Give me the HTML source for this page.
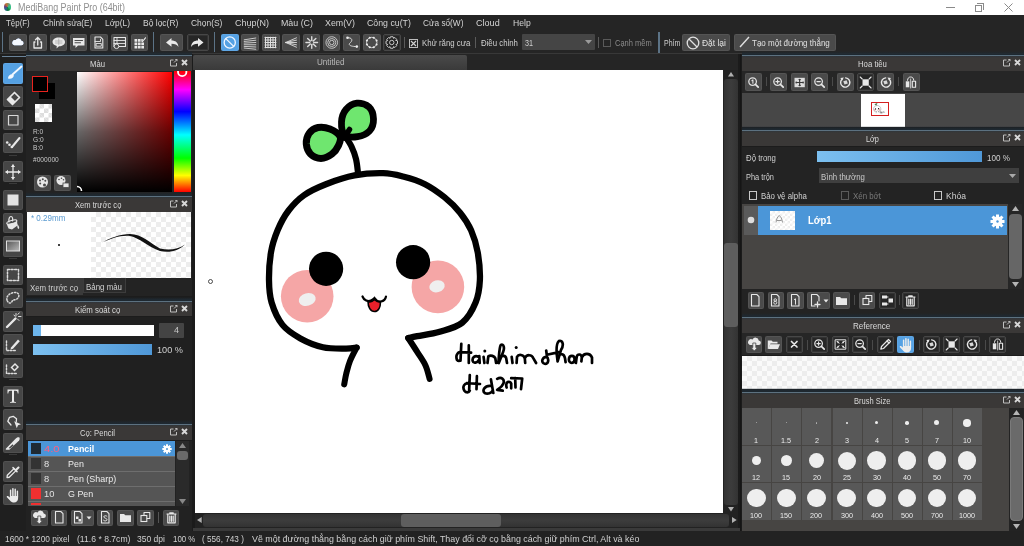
<!DOCTYPE html><html><head><meta charset="utf-8"><style>
*{margin:0;padding:0;box-sizing:border-box}
html,body{width:1024px;height:546px;overflow:hidden;background:#1c1c1c;font-family:"Liberation Sans",sans-serif}
.a{position:absolute}
.t{position:absolute;white-space:nowrap;line-height:1;transform-origin:0 0}
.b{position:absolute;background:#4a4a4a;border-radius:2px;box-shadow:inset 0 0 0 1px rgba(255,255,255,0.06)}
svg{position:absolute;overflow:visible}
</style></head><body>
<div class="a" style="left:0px;top:0px;width:1024px;height:15px;background:#fff"></div>
<div class="a" style="left:4px;top:3px;width:6.6px;height:8px;border-radius:50%;background:conic-gradient(from -30deg,#c86a30,#40b890 25%,#20c070 40%,#107a40 55%,#2a6a90 70%,#6a3a80 85%,#c86a30)"></div>
<div class="t" style="left:18.00px;top:2.53px;font-size:10px;color:#8f8f8f;transform:scaleX(0.891);">MediBang Paint Pro (64bit)</div>
<div class="a" style="left:946px;top:7px;width:9px;height:1px;background:#8a8a8a"></div>
<div class="a" style="left:974.5px;top:4.5px;width:7px;height:7px;border:1px solid #8a8a8a"></div>
<div class="a" style="left:976.5px;top:2.5px;width:7px;height:7px;border-top:1px solid #8a8a8a;border-right:1px solid #8a8a8a"></div>
<svg style="left:1004px;top:3px;" width="9" height="9" viewBox="0 0 9 9"><path d="M0.5 0.5L8.5 8.5M8.5 0.5L0.5 8.5" stroke="#8a8a8a" stroke-width="1"/></svg>
<div class="a" style="left:0px;top:15px;width:1024px;height:15px;background:#252525"></div>
<div class="t" style="left:6.40px;top:18.04px;font-size:9.4px;color:#d4d4d4;transform:scaleX(0.844);">Tệp(F)</div>
<div class="t" style="left:42.80px;top:18.04px;font-size:9.4px;color:#d4d4d4;transform:scaleX(0.885);">Chỉnh sửa(E)</div>
<div class="t" style="left:105.00px;top:18.04px;font-size:9.4px;color:#d4d4d4;transform:scaleX(0.889);">Lớp(L)</div>
<div class="t" style="left:142.50px;top:18.04px;font-size:9.4px;color:#d4d4d4;transform:scaleX(0.906);">Bộ lọc(R)</div>
<div class="t" style="left:190.50px;top:18.04px;font-size:9.4px;color:#d4d4d4;transform:scaleX(0.900);">Chọn(S)</div>
<div class="t" style="left:234.50px;top:18.04px;font-size:9.4px;color:#d4d4d4;transform:scaleX(0.957);">Chụp(N)</div>
<div class="t" style="left:281.00px;top:18.04px;font-size:9.4px;color:#d4d4d4;transform:scaleX(0.943);">Màu (C)</div>
<div class="t" style="left:324.75px;top:18.04px;font-size:9.4px;color:#d4d4d4;transform:scaleX(0.941);">Xem(V)</div>
<div class="t" style="left:366.50px;top:18.04px;font-size:9.4px;color:#d4d4d4;transform:scaleX(0.936);">Công cụ(T)</div>
<div class="t" style="left:423.00px;top:18.04px;font-size:9.4px;color:#d4d4d4;transform:scaleX(0.881);">Cửa sổ(W)</div>
<div class="t" style="left:476.00px;top:18.04px;font-size:9.4px;color:#d4d4d4;transform:scaleX(0.966);">Cloud</div>
<div class="t" style="left:513.00px;top:18.04px;font-size:9.4px;color:#d4d4d4;transform:scaleX(0.919);">Help</div>
<div class="a" style="left:0px;top:30px;width:1024px;height:24px;background:#252525"></div>
<div class="a" style="left:0px;top:30px;width:838px;height:23.5px;background:#252525"></div>
<div class="a" style="left:0px;top:53px;width:1024px;height:1px;background:#383838"></div>
<div class="a" style="left:2px;top:32px;width:1.2px;height:20px;background:#5c7386"></div>
<svg width="0" height="0" style="position:absolute"><defs><filter id="glow" x="-50%" y="-50%" width="200%" height="200%"><feGaussianBlur stdDeviation="0.8" result="b"/><feFlood flood-color="#7ab8ff" flood-opacity="0.9"/><feComposite in2="b" operator="in"/><feMerge><feMergeNode/><feMergeNode in="SourceGraphic"/></feMerge></filter></defs></svg>
<div class="b" style="left:9.0px;top:34px;width:17.5px;height:17px;background:#4a4a4a"></div>
<svg style="left:9.00px;top:34.00px" width="17.5" height="17" viewBox="0 0 17.5 17"><g transform="translate(8.75 8.5) scale(0.8) translate(-8.75 -9)"><path d="M4.5 12.5H13a2.8 2.8 0 0 0 .3-5.6A3.8 3.8 0 0 0 6.2 6 2.6 2.6 0 0 0 4.5 12.5Z" fill="#f4f8ff" filter="url(#glow)"/></g></svg>
<div class="b" style="left:29.3px;top:34px;width:17.5px;height:17px;background:#4a4a4a"></div>
<svg style="left:29.30px;top:34.00px" width="17.5" height="17" viewBox="0 0 17.5 17"><path d="M6 8H5V14H12.5V8H11.5" fill="none" stroke="#e8e8e8" stroke-width="1.3" stroke-linecap="round" stroke-linejoin="round" /><path d="M8.75 11V3.5M6.5 5.8L8.75 3.5L11 5.8" fill="none" stroke="#e8e8e8" stroke-width="1.3" stroke-linecap="round" stroke-linejoin="round" /></svg>
<div class="b" style="left:49.6px;top:34px;width:17.5px;height:17px;background:#4a4a4a"></div>
<svg style="left:49.60px;top:34.00px" width="17.5" height="17" viewBox="0 0 17.5 17"><path d="M8.75 3.5C12.5 3.5 15 5.5 15 8C15 10.5 12.5 12.3 9 12.3L6.5 14.5L6.8 12C4.3 11.4 2.5 9.8 2.5 8C2.5 5.5 5 3.5 8.75 3.5Z" fill="#e8e8e8" /><path d="M5.5 7H12M5.5 9H12M8.75 5V10.5" fill="none" stroke="#a0a0a0" stroke-width="0.7" stroke-linecap="round" stroke-linejoin="round" /></svg>
<div class="b" style="left:69.9px;top:34px;width:17.5px;height:17px;background:#4a4a4a"></div>
<svg style="left:69.90px;top:34.00px" width="17.5" height="17" viewBox="0 0 17.5 17"><path d="M3 4H14.5V11.5H8L5.5 14V11.5H3Z" fill="#e8e8e8" /><path d="M5 6.5H12.5M5 8.8H10.5" fill="none" stroke="#4a4a4a" stroke-width="1.1" stroke-linecap="round" stroke-linejoin="round" /></svg>
<div class="b" style="left:90.2px;top:34px;width:17.5px;height:17px;background:#4a4a4a"></div>
<svg style="left:90.20px;top:34.00px" width="17.5" height="17" viewBox="0 0 17.5 17"><path d="M5 3H10.5L12.8 5.3V14H5Z" fill="none" stroke="#e8e8e8" stroke-width="1.1" stroke-linecap="round" stroke-linejoin="round" /><path d="M5 7.5H10.5V5.3M6.5 9.5H11.3V12.2H6.5Z" fill="none" stroke="#e8e8e8" stroke-width="0.9" stroke-linecap="round" stroke-linejoin="round" /></svg>
<div class="b" style="left:110.5px;top:34px;width:17.5px;height:17px;background:#4a4a4a"></div>
<svg style="left:110.50px;top:34.00px" width="17.5" height="17" viewBox="0 0 17.5 17"><path d="M3 3.5H14.5V12.5H3Z" fill="none" stroke="#e8e8e8" stroke-width="1.1" stroke-linecap="round" stroke-linejoin="round" /><path d="M3 6.5H14.5M3 9.5H14.5M6 3.5V12.5" fill="none" stroke="#e8e8e8" stroke-width="0.9" stroke-linecap="round" stroke-linejoin="round" /><circle cx="5.5" cy="12.3" r="2.3" fill="#4a4a4a" stroke="#e8e8e8" stroke-width="0.9"/></svg>
<div class="b" style="left:130.8px;top:34px;width:17.5px;height:17px;background:#4a4a4a"></div>
<svg style="left:130.80px;top:34.00px" width="17.5" height="17" viewBox="0 0 17.5 17"><path d="M3.5 5h2.7v2.7H3.5zM6.9 5h2.7v2.7H6.9zM3.5 8.4h2.7v2.7H3.5zM6.9 8.4h2.7v2.7H6.9zM10.3 8.4h2.7v2.7H10.3zM3.5 11.8h2.7v2.7H3.5zM6.9 11.8h2.7v2.7H6.9zM10.3 11.8h2.7v2.7H10.3zM10.3 5h1.5v2.7H10.3z" fill="#e8e8e8" /><path d="M11.5 7.5L14.5 3.8" fill="none" stroke="#e8e8e8" stroke-width="1.1" stroke-linecap="round" stroke-linejoin="round" /></svg>
<div class="a" style="left:152.5px;top:32px;width:1.2px;height:20px;background:#5c7386"></div>
<div class="b" style="left:160px;top:34px;width:23px;height:17px;background:#4a4a4a"></div>
<svg style="left:162.75px;top:34.00px" width="17.5" height="17" viewBox="0 0 17.5 17"><path d="M3 8.5L8.5 4V6.5C12.5 6.5 15 8.5 15.5 13C14 10.5 12 9.8 8.5 9.8V12.8Z" fill="#e8e8e8" /></svg>
<div class="b" style="left:187px;top:34px;width:22px;height:17px;background:#262626;border:1px solid #474747"></div>
<svg style="left:189.25px;top:34.00px" width="17.5" height="17" viewBox="0 0 17.5 17"><path d="M14.5 8.5L9 4V6.5C5 6.5 2.5 8.5 2 13C3.5 10.5 5.5 9.8 9 9.8V12.8Z" fill="#e8e8e8" /></svg>
<div class="a" style="left:213.5px;top:32px;width:1.2px;height:20px;background:#5c7386"></div>
<div class="b" style="left:221px;top:34px;width:17.5px;height:17px;background:#55a1e3"></div>
<svg style="left:221.00px;top:34.00px" width="17.5" height="17" viewBox="0 0 17.5 17"><circle cx="8.75" cy="8.5" r="5.6" fill="none" stroke="#f0f6ff" stroke-width="1.3"/><path d="M4.8 4.6L12.7 12.4" fill="none" stroke="#f0f6ff" stroke-width="1.3" stroke-linecap="round" stroke-linejoin="round" /></svg>
<div class="b" style="left:241.3px;top:34px;width:17.5px;height:17px;background:#4a4a4a"></div>
<svg style="left:241.30px;top:34.00px" width="17.5" height="17" viewBox="0 0 17.5 17"><path d="M3.2 5.80L14.8 4.00M3.2 7.45L14.8 6.25M3.2 9.10L14.8 8.50M3.2 10.75L14.8 10.75M3.2 12.40L14.8 13.00M3.2 14.05L14.8 15.25" fill="none" stroke="#d8d8d8" stroke-width="0.9" stroke-linecap="round" stroke-linejoin="round" /></svg>
<div class="b" style="left:262px;top:34px;width:17.5px;height:17px;background:#4a4a4a"></div>
<svg style="left:262.00px;top:34.00px" width="17.5" height="17" viewBox="0 0 17.5 17"><path d="M3.50 3.2V13.8M6.00 3.2V13.8M8.50 3.2V13.8M11.00 3.2V13.8M13.50 3.2V13.8M3 3.50H14M3 6.00H14M3 8.50H14M3 11.00H14M3 13.50H14" fill="none" stroke="#e0e0e0" stroke-width="1" stroke-linecap="round" stroke-linejoin="round" /></svg>
<div class="b" style="left:282px;top:34px;width:17.5px;height:17px;background:#4a4a4a"></div>
<svg style="left:282.00px;top:34.00px" width="17.5" height="17" viewBox="0 0 17.5 17"><path d="M3.8 8.5L14.5 3.80M3.8 8.5L14.5 6.15M3.8 8.5L14.5 8.50M3.8 8.5L14.5 10.85M3.8 8.5L14.5 13.20" fill="none" stroke="#dcdcdc" stroke-width="0.9" stroke-linecap="round" stroke-linejoin="round" /></svg>
<div class="b" style="left:302.6px;top:34px;width:17.5px;height:17px;background:#4a4a4a"></div>
<svg style="left:302.60px;top:34.00px" width="17.5" height="17" viewBox="0 0 17.5 17"><path d="M10.75 8.50L14.55 8.50M10.16 9.91L12.85 12.60M8.75 10.50L8.75 14.30M7.34 9.91L4.65 12.60M6.75 8.50L2.95 8.50M7.34 7.09L4.65 4.40M8.75 6.50L8.75 2.70M10.16 7.09L12.85 4.40" fill="none" stroke="#dcdcdc" stroke-width="1.4" stroke-linecap="round" stroke-linejoin="round" /></svg>
<div class="b" style="left:322.6px;top:34px;width:17.5px;height:17px;background:#4a4a4a"></div>
<svg style="left:322.60px;top:34.00px" width="17.5" height="17" viewBox="0 0 17.5 17"><g fill="none" stroke="#d0d0d0" stroke-width="0.9"><circle cx="8.75" cy="8.5" r="5.8"/><circle cx="8.75" cy="8.5" r="4"/><circle cx="8.75" cy="8.5" r="2.2"/></g></svg>
<div class="b" style="left:342.6px;top:34px;width:17.5px;height:17px;background:#4a4a4a"></div>
<svg style="left:342.60px;top:34.00px" width="17.5" height="17" viewBox="0 0 17.5 17"><path d="M4.5 3.8C9 3.3 10 6.3 7.5 8.5C5 10.5 6 12.5 13.8 12.6" fill="none" stroke="#d8d8d8" stroke-width="1" stroke-linecap="round" stroke-linejoin="round" /><circle cx="4.5" cy="3.8" r="1.3" fill="#ececec"/><circle cx="13.8" cy="12.6" r="1.3" fill="#ececec"/></svg>
<div class="b" style="left:363.4px;top:34px;width:17.5px;height:17px;background:#4a4a4a"></div>
<svg style="left:363.40px;top:34.00px" width="17.5" height="17" viewBox="0 0 17.5 17"><circle cx="8.75" cy="8.5" r="5.2" fill="none" stroke="#d8d8d8" stroke-width="0.9"/><circle cx="13.55" cy="10.49" r="1.05" fill="#ececec"/><circle cx="10.74" cy="13.30" r="1.05" fill="#ececec"/><circle cx="6.76" cy="13.30" r="1.05" fill="#ececec"/><circle cx="3.95" cy="10.49" r="1.05" fill="#ececec"/><circle cx="3.95" cy="6.51" r="1.05" fill="#ececec"/><circle cx="6.76" cy="3.70" r="1.05" fill="#ececec"/><circle cx="10.74" cy="3.70" r="1.05" fill="#ececec"/><circle cx="13.55" cy="6.51" r="1.05" fill="#ececec"/></svg>
<div class="b" style="left:383.4px;top:34px;width:17.5px;height:17px;background:#262626;border:1px solid #474747"></div>
<svg style="left:383.40px;top:34.00px" width="17.5" height="17" viewBox="0 0 17.5 17"><path d="M14.51 7.21L14.51 9.79L12.95 10.38L13.05 10.14L13.73 11.66L11.91 13.48L10.39 12.80L10.63 12.70L10.04 14.26L7.46 14.26L6.87 12.70L7.11 12.80L5.59 13.48L3.77 11.66L4.45 10.14L4.55 10.38L2.99 9.79L2.99 7.21L4.55 6.62L4.45 6.86L3.77 5.34L5.59 3.52L7.11 4.20L6.87 4.30L7.46 2.74L10.04 2.74L10.63 4.30L10.39 4.20L11.91 3.52L13.73 5.34L13.05 6.86L12.95 6.62Z" fill="none" stroke="#d8d8d8" stroke-width="0.9" stroke-linecap="round" stroke-linejoin="round" /><circle cx="8.75" cy="8.5" r="2.2" fill="none" stroke="#d8d8d8" stroke-width="0.9"/></svg>
<div class="a" style="left:404px;top:37px;width:1px;height:11px;background:#5a5a5a"></div>
<div class="a" style="left:409px;top:38.5px;width:9px;height:9px;border:1px solid #bdbdbd"></div>
<svg style="left:411px;top:40.5px;" width="5" height="5" viewBox="0 0 5 5"><path d="M0 0L5 5M5 0L0 5" stroke="#d0d0d0" stroke-width="1.2"/></svg>
<div class="t" style="left:421.50px;top:38.04px;font-size:9.4px;color:#d0d0d0;transform:scaleX(0.835);">Khử răng cưa</div>
<div class="a" style="left:475px;top:37px;width:1px;height:11px;background:#5a5a5a"></div>
<div class="t" style="left:481.30px;top:38.04px;font-size:9.4px;color:#d0d0d0;transform:scaleX(0.833);">Điều chỉnh</div>
<div class="a" style="left:522px;top:34px;width:72.6px;height:15.5px;background:#454545;border-radius:1px"></div>
<div class="t" style="left:524.50px;top:38.04px;font-size:9.4px;color:#d0d0d0;transform:scaleX(0.767);">31</div>
<svg style="left:585px;top:40px;" width="7" height="4" viewBox="0 0 7 4"><path d="M0 0H7L3.5 4Z" fill="#9a9a9a"/></svg>
<div class="a" style="left:597.5px;top:37px;width:1px;height:11px;background:#5a5a5a"></div>
<div class="a" style="left:603px;top:38.5px;width:8px;height:8.5px;border:1px solid #5a5a5a"></div>
<div class="t" style="left:615.20px;top:38.04px;font-size:9.4px;color:#8a8a8a;transform:scaleX(0.801);">Cạnh mềm</div>
<div class="a" style="left:657.5px;top:31.5px;width:2px;height:21px;background:#5c7386"></div>
<div class="t" style="left:663.70px;top:38.04px;font-size:9.4px;color:#d0d0d0;transform:scaleX(0.743);">Phím</div>
<div class="b" style="left:682px;top:34px;width:47.6px;height:17px"></div>
<svg style="left:685.5px;top:35.5px;" width="14" height="14" viewBox="0 0 14 14"><circle cx="7" cy="7" r="5.8" fill="none" stroke="#e0e0e0" stroke-width="1.3"/><path d="M3 3L11 11" stroke="#e0e0e0" stroke-width="1.3"/></svg>
<div class="t" style="left:702.00px;top:38.04px;font-size:9.4px;color:#e0e0e0;transform:scaleX(0.901);">Đặt lại</div>
<div class="b" style="left:733.6px;top:34px;width:102px;height:17px"></div>
<svg style="left:739px;top:36px;" width="12" height="12" viewBox="0 0 12 12"><path d="M1 11L10 1" stroke="#e0e0e0" stroke-width="1.4"/></svg>
<div class="t" style="left:752.00px;top:38.04px;font-size:9.4px;color:#e0e0e0;transform:scaleX(0.854);">Tạo một đường thẳng</div>
<div class="a" style="left:0px;top:54px;width:26px;height:477px;background:#1f1f1f"></div>
<div class="a" style="left:1.5px;top:55.5px;width:24px;height:1px;background:#6a8298"></div>
<div class="b" style="left:3px;top:63px;width:20.3px;height:20.5px;background:#55a1e3"></div>
<svg style="left:3px;top:63.3px" width="20" height="20" viewBox="0 0 20 20"><path d="M9.5 11.5L18.5 3.5" fill="none" stroke="#f2f8ff" stroke-width="1.8" stroke-linecap="round" stroke-linejoin="round" /><path d="M5 15.5C5 13 7 11 9.8 11.3L10.8 12.3C10.8 15 8 16.5 5 15.5Z" fill="#f2f8ff" /></svg>
<div class="b" style="left:3px;top:86.25px;width:20.3px;height:20.5px;background:#464646"></div>
<svg style="left:3px;top:86.55px" width="20" height="20" viewBox="0 0 20 20"><path d="M4.5 12.5L11.5 5.5L16.5 10.5L9.5 17.5Z" fill="none" stroke="#e8e8e8" stroke-width="1.7" stroke-linecap="round" stroke-linejoin="round" /><path d="M4.5 12.5L7.5 9.5L12.5 14.5L9.5 17.5Z" fill="#e8e8e8" /></svg>
<div class="b" style="left:3px;top:109.5px;width:20.3px;height:20.5px;background:#464646"></div>
<svg style="left:3px;top:109.8px" width="20" height="20" viewBox="0 0 20 20"><path d="M5.5 5.5H15V15H5.5Z" fill="none" stroke="#d8d8d8" stroke-width="1.2" stroke-linecap="round" stroke-linejoin="round" /></svg>
<div class="b" style="left:3px;top:132.75px;width:20.3px;height:20.5px;background:#464646"></div>
<svg style="left:3px;top:133.05px" width="20" height="20" viewBox="0 0 20 20"><path d="M9 14L16.5 5" fill="none" stroke="#e8e8e8" stroke-width="2" stroke-linecap="round" stroke-linejoin="round" /><circle cx="4.2" cy="9.5" r="1.3" fill="#e8e8e8"/><circle cx="6.5" cy="11.8" r="1.3" fill="#e8e8e8"/><circle cx="8.8" cy="14" r="1.3" fill="#e8e8e8"/></svg>
<div class="b" style="left:3px;top:161.2px;width:20.3px;height:20.5px;background:#464646"></div>
<svg style="left:3px;top:161.5px" width="20" height="20" viewBox="0 0 20 20"><path d="M10 3V17M3 10H17" fill="none" stroke="#e8e8e8" stroke-width="1.3" stroke-linecap="round" stroke-linejoin="round" /><path d="M10 2.5L7.8 5H12.2ZM10 17.5L7.8 15H12.2ZM2.5 10L5 7.8V12.2ZM17.5 10L15 7.8V12.2Z" fill="#e8e8e8" /></svg>
<div class="b" style="left:3px;top:189.64999999999998px;width:20.3px;height:20.5px;background:#464646"></div>
<svg style="left:3px;top:189.95px" width="20" height="20" viewBox="0 0 20 20"><path d="M4.5 4.5H15.5V15.5H4.5Z" fill="#e4e4e4" /></svg>
<div class="b" style="left:3px;top:212.89999999999998px;width:20.3px;height:20.5px;background:#464646"></div>
<svg style="left:3px;top:213.2px" width="20" height="20" viewBox="0 0 20 20"><path d="M3.5 10.5L14 7.5L14.5 12.5L9 16.5L5.5 15.5Z" fill="#e8e8e8" /><ellipse cx="8.8" cy="9" rx="5.3" ry="1.6" transform="rotate(-16 8.8 9)" fill="#464646" stroke="#e8e8e8" stroke-width="1"/><path d="M6 8.8C5.5 5.5 6.5 3.5 8 3.5C9.5 3.5 10 5.5 9.5 8" fill="none" stroke="#e8e8e8" stroke-width="1.2" stroke-linecap="round" stroke-linejoin="round" /><path d="M14.3 11C16 12.8 16.8 15 15.8 15.8C14.8 16.3 14 14.5 14.3 11Z" fill="#e8e8e8" /></svg>
<div class="b" style="left:3px;top:236.14999999999998px;width:20.3px;height:20.5px;background:#464646"></div>
<svg style="left:3px;top:236.45px" width="20" height="20" viewBox="0 0 20 20"><defs><linearGradient id="gg" x1="0" y1="0" x2="1" y2="1"><stop offset="0" stop-color="#555"/><stop offset="1" stop-color="#bbb"/></linearGradient></defs><rect x="3.5" y="5" width="13" height="10" fill="url(#gg)" stroke="#e0e0e0" stroke-width="1"/></svg>
<div class="b" style="left:3px;top:264.59999999999997px;width:20.3px;height:20.5px;background:#464646"></div>
<svg style="left:3px;top:264.9px" width="20" height="20" viewBox="0 0 20 20"><path d="M4.5 4.5H15.5V15.5H4.5Z" fill="none" stroke="#dcdcdc" stroke-width="1.5" stroke-linecap="round" stroke-linejoin="round" stroke-dasharray="2 1.6"/></svg>
<div class="b" style="left:3px;top:287.84999999999997px;width:20.3px;height:20.5px;background:#464646"></div>
<svg style="left:3px;top:288.15px" width="20" height="20" viewBox="0 0 20 20"><path d="M4 12C3 8 7 5 11 4.5C15.5 4 17 7 15 10C13 12.5 10 11 9 13.5C8 16 5 15.5 4 12Z" fill="none" stroke="#dcdcdc" stroke-width="1.5" stroke-linecap="round" stroke-linejoin="round" stroke-dasharray="1.2 1.8" stroke-linecap="butt"/></svg>
<div class="b" style="left:3px;top:311.09999999999997px;width:20.3px;height:20.5px;background:#464646"></div>
<svg style="left:3px;top:311.4px" width="20" height="20" viewBox="0 0 20 20"><path d="M4 16L12.5 7.5" fill="none" stroke="#e8e8e8" stroke-width="2.4" stroke-linecap="round" stroke-linejoin="round" /><path d="M13 2.5V5M15.5 5.5H18M14.8 3.3L16.3 2M11 4L12 5.3M14.5 8L16 9.5" fill="none" stroke="#dcdcdc" stroke-width="1" stroke-linecap="round" stroke-linejoin="round" /></svg>
<div class="b" style="left:3px;top:334.34999999999997px;width:20.3px;height:20.5px;background:#464646"></div>
<svg style="left:3px;top:334.65px" width="20" height="20" viewBox="0 0 20 20"><path d="M3.5 6V15.5H13" fill="none" stroke="#dcdcdc" stroke-width="1.4" stroke-linecap="round" stroke-linejoin="round" stroke-dasharray="1.8 1.5"/><path d="M8 12.5L15 4.5L16.8 6.2L10 13.8L7.5 14.5Z" fill="#e8e8e8" /></svg>
<div class="b" style="left:3px;top:357.59999999999997px;width:20.3px;height:20.5px;background:#464646"></div>
<svg style="left:3px;top:357.9px" width="20" height="20" viewBox="0 0 20 20"><path d="M3.5 7V15.5H14" fill="none" stroke="#dcdcdc" stroke-width="1.4" stroke-linecap="round" stroke-linejoin="round" stroke-dasharray="1.8 1.5"/><path d="M7.5 9.5L12 5L16 9L11.5 13.5Z" fill="#e8e8e8" /><path d="M9.5 9.5L12 7L14 9L11.5 11.5Z" fill="#464646" /></svg>
<div class="b" style="left:3px;top:386.04999999999995px;width:20.3px;height:20.5px;background:#464646"></div>
<svg style="left:3px;top:386.34999999999997px" width="20" height="20" viewBox="0 0 20 20"><path d="M4.5 3.5H15.5V7.5H14.7C14.5 5.5 14 4.8 12.5 4.8H11V15C11 15.8 11.5 16 13 16.1V16.8H7V16.1C8.5 16 9 15.8 9 15V4.8H7.5C6 4.8 5.5 5.5 5.3 7.5H4.5Z" fill="#ececec" /></svg>
<div class="b" style="left:3px;top:409.29999999999995px;width:20.3px;height:20.5px;background:#464646"></div>
<svg style="left:3px;top:409.59999999999997px" width="20" height="20" viewBox="0 0 20 20"><path d="M8 15L4.8 11.3L6.5 7.3L10.2 6.3L13.5 8.8L13.3 11.5" fill="none" stroke="#e8e8e8" stroke-width="1.3" stroke-linecap="round" stroke-linejoin="round" /><path d="M11.2 11.2L18 14.3L15 15.2L13.8 18.2Z" fill="#e8e8e8" /></svg>
<div class="b" style="left:3px;top:432.54999999999995px;width:20.3px;height:20.5px;background:#464646"></div>
<svg style="left:3px;top:432.84999999999997px" width="20" height="20" viewBox="0 0 20 20"><path d="M2.8 15.8L12.8 5.6C13.8 4.6 15.3 4 16.4 4.4C17 5.4 16.6 7 15.6 8L6.3 16.8L2.8 16.8Z" fill="#e8e8e8" /><path d="M5.6 14.9L9.6 11.2L10.6 12.6L7 15.5Z" fill="#464646" /></svg>
<div class="b" style="left:3px;top:460.99999999999994px;width:20.3px;height:20.5px;background:#464646"></div>
<svg style="left:3px;top:461.29999999999995px" width="20" height="20" viewBox="0 0 20 20"><path d="M4 16.5L4.3 14.3L11 7.6L13 9.6L6.2 16.3Z" fill="none" stroke="#e8e8e8" stroke-width="1.3" stroke-linecap="round" stroke-linejoin="round" /><path d="M10 6.6L14 10.6" fill="none" stroke="#e8e8e8" stroke-width="1.5" stroke-linecap="round" stroke-linejoin="round" /><path d="M12 8.6L14.8 5.8C15.8 4.8 17.2 6.2 16.2 7.2L13.4 10Z" fill="#e8e8e8" /></svg>
<div class="b" style="left:3px;top:484.24999999999994px;width:20.3px;height:20.5px;background:#464646"></div>
<svg style="left:3px;top:484.54999999999995px" width="20" height="20" viewBox="0 0 20 20"><path d="M7.6 11.5V5.2M9.9 11V3.6M12.2 11V4.2M14.4 11.5V6.2" fill="none" stroke="#ececec" stroke-width="1.45" stroke-linecap="round" stroke-linejoin="round" /><path d="M6.9 11H15.1V13.2C15.1 15.6 13.5 17.4 11 17.4H10.2C8.7 17.4 7.8 16.7 7 15.6L3.9 12.2C3.3 11.4 4.2 10.5 5 11.1L6.9 12.6Z" fill="#ececec" /></svg>
<div class="a" style="left:9px;top:154.55px;width:8px;height:1px;background:#3a3a3a"></div>
<div class="a" style="left:9px;top:183.0px;width:8px;height:1px;background:#3a3a3a"></div>
<div class="a" style="left:9px;top:257.95px;width:8px;height:1px;background:#3a3a3a"></div>
<div class="a" style="left:9px;top:379.4px;width:8px;height:1px;background:#3a3a3a"></div>
<div class="a" style="left:9px;top:454.34999999999997px;width:8px;height:1px;background:#3a3a3a"></div>
<div class="a" style="left:26px;top:51.0px;width:165.5px;height:4.5px;background:linear-gradient(rgba(30,40,48,0),#1e2830 60%)"></div>
<div class="a" style="left:26px;top:55.0px;width:165.5px;height:1.2px;background:#5c7180"></div>
<div class="a" style="left:26px;top:56.2px;width:165.5px;height:14.8px;background:linear-gradient(#30353a,#3a3837 2px)"></div>
<div class="t" style="left:90.25px;top:59.04px;font-size:9.4px;color:#dadada;transform:scaleX(0.820);">Màu</div>
<svg style="left:169.0px;top:58.0px;" width="9" height="9" viewBox="0 0 9 9"><path d="M4.5 2H1.5V8H7.5V5" fill="none" stroke="#bfbfbf" stroke-width="1"/><path d="M5 4.5L8 1.5M6.3 1.5H8V3.2" fill="none" stroke="#bfbfbf" stroke-width="1"/></svg>
<svg style="left:181.0px;top:59.0px;" width="7" height="7" viewBox="0 0 7 7"><path d="M1 1L6 6M6 1L1 6" stroke="#d8d8d8" stroke-width="1.9"/></svg>
<div class="a" style="left:26px;top:71px;width:165.5px;height:125px;background:#232323"></div>
<div class="a" style="left:39px;top:83px;width:16px;height:16px;background:#000"></div>
<div class="a" style="left:32px;top:76px;width:16px;height:16px;background:#000;border:1.5px solid #e8231e"></div>
<div class="a" style="left:34.5px;top:92px;width:0px;height:0px;"></div>
<div class="a" style="left:34.5px;top:104px;width:17.5px;height:18px;background:#fff;background-image:linear-gradient(45deg,#ddd 25%,transparent 25%,transparent 75%,#ddd 75%),linear-gradient(45deg,#ddd 25%,transparent 25%,transparent 75%,#ddd 75%);background-size:9px 9px;background-position:0 0,4.5px 4.5px"></div>
<div class="t" style="left:33.00px;top:127.90px;font-size:7.2px;color:#c8c8c8;transform:scaleX(0.920);">R:0</div>
<div class="t" style="left:33.00px;top:136.40px;font-size:7.2px;color:#c8c8c8;transform:scaleX(0.920);">G:0</div>
<div class="t" style="left:33.00px;top:144.40px;font-size:7.2px;color:#c8c8c8;transform:scaleX(0.920);">B:0</div>
<div class="t" style="left:33.00px;top:155.90px;font-size:7.2px;color:#c8c8c8;transform:scaleX(0.920);">#000000</div>
<div class="b" style="left:34px;top:175px;width:17px;height:15.5px;background:#4a4a4a"></div>
<svg style="left:34.00px;top:174.25px" width="17" height="17" viewBox="0 0 17 17"><circle cx="8.5" cy="8" r="5.5" fill="#e8e8e8"/><circle cx="6" cy="6.5" r="1" fill="#4a4a4a"/><circle cx="8.8" cy="5.3" r="1" fill="#4a4a4a"/><circle cx="11.3" cy="6.8" r="1" fill="#4a4a4a"/><circle cx="6.2" cy="9.6" r="1" fill="#4a4a4a"/><circle cx="10.5" cy="11" r="1.5" fill="#4a4a4a"/></svg>
<div class="b" style="left:54px;top:175px;width:17px;height:15.5px;background:#4a4a4a"></div>
<svg style="left:54.00px;top:174.25px" width="17" height="17" viewBox="0 0 17 17"><circle cx="7" cy="6.5" r="4.5" fill="#e8e8e8"/><circle cx="5" cy="5.5" r="0.8" fill="#4a4a4a"/><circle cx="7.5" cy="4.3" r="0.8" fill="#4a4a4a"/><circle cx="9.5" cy="5.8" r="0.8" fill="#4a4a4a"/><rect x="9" y="9" width="6" height="4.5" fill="#e8e8e8" stroke="#4a4a4a" stroke-width="0.8"/></svg>
<div class="a" style="left:77px;top:72px;width:95px;height:119.5px;background:linear-gradient(to bottom,rgba(0,0,0,0),rgba(0,0,0,0.6) 50%,#000),linear-gradient(to right,#fff,#ff0000)"></div>
<div class="a" style="left:174.3px;top:71px;width:16.4px;height:120.5px;background:linear-gradient(to bottom,#ff0000 0%,#ff00ff 15.4%,#0000ff 33.6%,#00ffff 52.8%,#00ff00 72%,#ffff00 86.3%,#ff0000 100%)"></div>
<div class="a" style="left:174.3px;top:71px;width:16.4px;height:8px;overflow:hidden"><svg style="left:0;top:-4.3px" width="16.4" height="12"><circle cx="8.2" cy="5" r="4.2" fill="none" stroke="#fff" stroke-width="1.8"/></svg></div>
<svg style="left:72px;top:185px;clip-path:inset(0 0 6px 5px)" width="12" height="12" viewBox="0 0 12 12"><path d="M77 191" /><circle cx="5" cy="6" r="4.5" fill="none" stroke="#fff" stroke-width="1.6"/></svg>
<div class="a" style="left:26px;top:192.0px;width:165.5px;height:4.5px;background:linear-gradient(rgba(30,40,48,0),#1e2830 60%)"></div>
<div class="a" style="left:26px;top:196.0px;width:165.5px;height:1.2px;background:#5c7180"></div>
<div class="a" style="left:26px;top:197.2px;width:165.5px;height:14.8px;background:linear-gradient(#30353a,#3a3837 2px)"></div>
<div class="t" style="left:74.50px;top:200.04px;font-size:9.4px;color:#dadada;transform:scaleX(0.810);">Xem trước cọ</div>
<svg style="left:169.0px;top:199.0px;" width="9" height="9" viewBox="0 0 9 9"><path d="M4.5 2H1.5V8H7.5V5" fill="none" stroke="#bfbfbf" stroke-width="1"/><path d="M5 4.5L8 1.5M6.3 1.5H8V3.2" fill="none" stroke="#bfbfbf" stroke-width="1"/></svg>
<svg style="left:181.0px;top:200.0px;" width="7" height="7" viewBox="0 0 7 7"><path d="M1 1L6 6M6 1L1 6" stroke="#d8d8d8" stroke-width="1.9"/></svg>
<div class="a" style="left:26px;top:212px;width:165.5px;height:84px;background:#232323"></div>
<div class="a" style="left:26.6px;top:211.5px;width:64.8px;height:66.7px;background:#fff"></div>
<div class="a" style="left:91.4px;top:211.5px;width:99.3px;height:66.7px;background-color:#fff;background-image:linear-gradient(45deg,#ededed 25%,transparent 25%,transparent 75%,#ededed 75%),linear-gradient(45deg,#ededed 25%,transparent 25%,transparent 75%,#ededed 75%);background-size:10px 10px;background-position:0 0,5px 5px"></div>
<div class="t" style="left:30.50px;top:214.09px;font-size:8.4px;color:#5a9ad0;transform:scaleX(0.960);">* 0.29mm</div>
<div class="a" style="left:58.2px;top:244.2px;width:2.2px;height:2.2px;background:#000;border-radius:50%"></div>
<svg style="left:0;top:0" width="1024" height="546"><path d="M100.7 243.3C110 238 120 234 130 234C142 234 150 243 160 248.5C170 251 178 249 185 244.5C178 251 170 253 160 251C148 247 140 238 130 236C120 235 110 239 100.7 243.3Z" fill="#111"/></svg>
<div class="a" style="left:26.6px;top:278.2px;width:56px;height:17.3px;background:#3a3a3a"></div>
<div class="t" style="left:30.00px;top:283.68px;font-size:9px;color:#d0d0d0;transform:scaleX(0.874);">Xem trước cọ</div>
<div class="a" style="left:82.6px;top:278.2px;width:43px;height:15px;background:#2a2a2a;border:1px solid #3c3c3c;border-top:none"></div>
<div class="t" style="left:86.00px;top:282.68px;font-size:9px;color:#d0d0d0;transform:scaleX(0.877);">Bảng màu</div>
<div class="a" style="left:26px;top:296.5px;width:165.5px;height:4.5px;background:linear-gradient(rgba(30,40,48,0),#1e2830 60%)"></div>
<div class="a" style="left:26px;top:300.5px;width:165.5px;height:1.2px;background:#5c7180"></div>
<div class="a" style="left:26px;top:301.7px;width:165.5px;height:14.8px;background:linear-gradient(#30353a,#3a3837 2px)"></div>
<div class="t" style="left:75.00px;top:304.54px;font-size:9.4px;color:#dadada;transform:scaleX(0.837);">Kiểm soát cọ</div>
<svg style="left:169.0px;top:303.5px;" width="9" height="9" viewBox="0 0 9 9"><path d="M4.5 2H1.5V8H7.5V5" fill="none" stroke="#bfbfbf" stroke-width="1"/><path d="M5 4.5L8 1.5M6.3 1.5H8V3.2" fill="none" stroke="#bfbfbf" stroke-width="1"/></svg>
<svg style="left:181.0px;top:304.5px;" width="7" height="7" viewBox="0 0 7 7"><path d="M1 1L6 6M6 1L1 6" stroke="#d8d8d8" stroke-width="1.9"/></svg>
<div class="a" style="left:26px;top:316.5px;width:165.5px;height:108px;background:#202020"></div>
<div class="a" style="left:33px;top:324.8px;width:120.5px;height:11.6px;background:#fff"></div>
<div class="a" style="left:33px;top:324.8px;width:8px;height:11.6px;background:#6cb4ec"></div>
<div class="a" style="left:158.6px;top:323px;width:25.4px;height:15px;background:#444;border-radius:1px"></div>
<div class="t" style="left:173.50px;top:326.38px;font-size:9px;color:#c8c8c8;transform:scaleX(1.001);">4</div>
<div class="a" style="left:33px;top:343.5px;width:119.2px;height:11.5px;background:linear-gradient(to right,#7cc0f0,#4f98d8)"></div>
<div class="t" style="left:157.00px;top:345.04px;font-size:9.4px;color:#d0d0d0;transform:scaleX(0.976);">100 %</div>
<div class="a" style="left:26px;top:420.0px;width:165.5px;height:4.5px;background:linear-gradient(rgba(30,40,48,0),#1e2830 60%)"></div>
<div class="a" style="left:26px;top:424.0px;width:165.5px;height:1.2px;background:#5c7180"></div>
<div class="a" style="left:26px;top:425.2px;width:165.5px;height:14.8px;background:linear-gradient(#30353a,#3a3837 2px)"></div>
<div class="t" style="left:80.25px;top:428.04px;font-size:9.4px;color:#dadada;transform:scaleX(0.817);">Cọ: Pencil</div>
<svg style="left:169.0px;top:427.0px;" width="9" height="9" viewBox="0 0 9 9"><path d="M4.5 2H1.5V8H7.5V5" fill="none" stroke="#bfbfbf" stroke-width="1"/><path d="M5 4.5L8 1.5M6.3 1.5H8V3.2" fill="none" stroke="#bfbfbf" stroke-width="1"/></svg>
<svg style="left:181.0px;top:428.0px;" width="7" height="7" viewBox="0 0 7 7"><path d="M1 1L6 6M6 1L1 6" stroke="#d8d8d8" stroke-width="1.9"/></svg>
<div class="a" style="left:26px;top:440.5px;width:165.5px;height:90.5px;background:#222"></div>
<div class="a" style="left:28.4px;top:441.4px;width:146.4px;height:64.6px;background:#555;overflow:hidden"><div class="a" style="left:0;top:0;width:146.4px;height:14.5px;background:#4b96d8"></div><div class="a" style="left:0;top:14.5px;width:146.4px;height:1px;background:#6e6e6e"></div><div class="a" style="left:0;top:29.5px;width:146.4px;height:1px;background:#6e6e6e"></div><div class="a" style="left:0;top:44.5px;width:146.4px;height:1px;background:#6e6e6e"></div><div class="a" style="left:0;top:59.5px;width:146.4px;height:1px;background:#6e6e6e"></div></div>
<div class="a" style="left:30.5px;top:442.9px;width:10.5px;height:11.5px;background:#1f2a33"></div>
<div class="t" style="left:44.20px;top:444.44px;font-size:9.4px;color:#ff6080;transform:scaleX(1.194);">4.0</div>
<div class="t" style="left:68.40px;top:444.27px;font-size:9.6px;color:#ffffff;transform:scaleX(0.930);font-weight:bold;">Pencil</div>
<div class="a" style="left:30.5px;top:457.9px;width:10.5px;height:11.5px;background:#333"></div>
<div class="t" style="left:44.20px;top:459.44px;font-size:9.4px;color:#e0e0e0;transform:scaleX(0.997);">8</div>
<div class="t" style="left:68.40px;top:459.27px;font-size:9.6px;color:#ececec;transform:scaleX(0.930);">Pen</div>
<div class="a" style="left:30.5px;top:472.9px;width:10.5px;height:11.5px;background:#333"></div>
<div class="t" style="left:44.20px;top:474.44px;font-size:9.4px;color:#e0e0e0;transform:scaleX(0.997);">8</div>
<div class="t" style="left:68.40px;top:474.27px;font-size:9.6px;color:#ececec;transform:scaleX(0.930);">Pen (Sharp)</div>
<div class="a" style="left:30.5px;top:487.9px;width:10.5px;height:11.5px;background:#f03030"></div>
<div class="t" style="left:44.20px;top:489.44px;font-size:9.4px;color:#e0e0e0;transform:scaleX(0.997);">10</div>
<div class="t" style="left:68.40px;top:489.27px;font-size:9.6px;color:#ececec;transform:scaleX(0.930);">G Pen</div>
<div class="a" style="left:30.5px;top:502.9px;width:10.5px;height:2.6000000000000227px;background:#f03030"></div>
<svg style="left:162px;top:444px;" width="10" height="10" viewBox="0 0 10 10"><g fill="#fff"><rect x="4" y="0.3" width="2" height="3" transform="rotate(0 5 5)"/><rect x="4" y="0.3" width="2" height="3" transform="rotate(45 5 5)"/><rect x="4" y="0.3" width="2" height="3" transform="rotate(90 5 5)"/><rect x="4" y="0.3" width="2" height="3" transform="rotate(135 5 5)"/><rect x="4" y="0.3" width="2" height="3" transform="rotate(180 5 5)"/><rect x="4" y="0.3" width="2" height="3" transform="rotate(225 5 5)"/><rect x="4" y="0.3" width="2" height="3" transform="rotate(270 5 5)"/><rect x="4" y="0.3" width="2" height="3" transform="rotate(315 5 5)"/><circle cx="5" cy="5" r="3.3"/></g><circle cx="5" cy="5" r="1" fill="#4f94d0"/></svg>
<div class="a" style="left:176px;top:441.4px;width:13px;height:64.6px;background:#2a2a2a"></div>
<div class="a" style="left:177px;top:451px;width:11px;height:9px;background:#6a6a6a;border-radius:3px"></div>
<svg style="left:179px;top:442.5px;" width="7" height="6" viewBox="0 0 7 6"><path d="M0 5H7L3.5 0Z" fill="#888"/></svg>
<svg style="left:179px;top:498.5px;" width="7" height="6" viewBox="0 0 7 6"><path d="M0 0H7L3.5 5Z" fill="#888"/></svg>
<div class="b" style="left:31px;top:509.5px;width:16.5px;height:16.5px;background:#4a4a4a"></div>
<svg style="left:31.00px;top:509.25px" width="16.5" height="17" viewBox="0 0 16.5 17"><path d="M3.8 9H12.5a2.3 2.3 0 0 0 .2-4.6A3.2 3.2 0 0 0 6.6 3.5 2.2 2.2 0 0 0 3.8 9Z" fill="#e8e8e8" /><path d="M6.8 7H9.8V11.5H11.6L8.3 15L5 11.5H6.8Z" fill="#e8e8e8" stroke="#4a4a4a" stroke-width="0.8"/></svg>
<div class="b" style="left:51.2px;top:509.5px;width:16px;height:16.5px;background:#4a4a4a"></div>
<svg style="left:50.95px;top:509.25px" width="16.5" height="17" viewBox="0 0 16.5 17"><path d="M4.5 2.5H9.8L12 4.7V14H4.5Z" fill="none" stroke="#e8e8e8" stroke-width="1.1" stroke-linecap="round" stroke-linejoin="round" /></svg>
<div class="b" style="left:71px;top:509.5px;width:22.6px;height:16.5px;background:#4a4a4a"></div>
<svg style="left:71.30px;top:509.25px" width="22" height="17" viewBox="0 0 22 17"><path d="M3.5 2.5H8.8L11 4.7V14H3.5Z" fill="none" stroke="#e8e8e8" stroke-width="1.1" stroke-linecap="round" stroke-linejoin="round" /><path d="M5 7.5h2.5v2.5H5zM7.5 10h2.5v2.5H7.5z" fill="#e8e8e8" /><path d="M15.5 7.5H20.5L18 10.5Z" fill="#e8e8e8" /></svg>
<div class="b" style="left:97px;top:509.5px;width:16.4px;height:16.5px;background:#4a4a4a"></div>
<svg style="left:96.95px;top:509.25px" width="16.5" height="17" viewBox="0 0 16.5 17"><path d="M4.5 2.5H9.8L12 4.7V14H4.5Z" fill="none" stroke="#e8e8e8" stroke-width="1.1" stroke-linecap="round" stroke-linejoin="round" /><path d="M10 7.3C9.5 6.5 7 6.3 6.8 7.8C6.7 9.3 10 9 10 10.7C10 12.2 7.2 12.3 6.5 11.3" fill="none" stroke="#e8e8e8" stroke-width="1" stroke-linecap="round" stroke-linejoin="round" /></svg>
<div class="b" style="left:116.8px;top:509.5px;width:17.2px;height:16.5px;background:#4a4a4a"></div>
<svg style="left:117.15px;top:509.25px" width="16.5" height="17" viewBox="0 0 16.5 17"><path d="M3 5H7L8.3 6.3H14V13H3Z" fill="#e8e8e8" /></svg>
<div class="b" style="left:137px;top:509.5px;width:17px;height:16.5px;background:#4a4a4a"></div>
<svg style="left:137.25px;top:509.25px" width="16.5" height="17" viewBox="0 0 16.5 17"><path d="M7 3.5H12.8V9.5H7Z" fill="none" stroke="#e8e8e8" stroke-width="1.1" stroke-linecap="round" stroke-linejoin="round" /><rect x="4" y="6.5" width="5.8" height="6" fill="#4a4a4a" stroke="#e8e8e8" stroke-width="1.1"/></svg>
<div class="b" style="left:162.7px;top:509.5px;width:16.3px;height:16.5px;background:#4a4a4a"></div>
<svg style="left:162.60px;top:509.25px" width="16.5" height="17" viewBox="0 0 16.5 17"><path d="M4 5H13M6.8 5V3.8H10.2V5M4.8 5.5V13.8H12.2V5.5M6.8 7V12.3M8.5 7V12.3M10.2 7V12.3" fill="none" stroke="#e8e8e8" stroke-width="1.2" stroke-linecap="round" stroke-linejoin="round" /></svg>
<div class="a" style="left:158px;top:512px;width:1px;height:11px;background:#555"></div>
<div class="a" style="left:192px;top:54px;width:550px;height:477px;background:#1b1b1b"></div>
<div class="a" style="left:193px;top:54px;width:545px;height:16px;background:#252525"></div>
<div class="a" style="left:193px;top:54.5px;width:274.25px;height:15.5px;background:linear-gradient(#4a4a4a,#3a3a3a);border-radius:2px 2px 0 0"></div>
<div class="t" style="left:316.50px;top:57.04px;font-size:9.4px;color:#b8b8b8;transform:scaleX(0.863);">Untitled</div>
<div class="a" style="left:195px;top:70px;width:528px;height:443px;background:#fff"></div>
<div class="a" style="left:723.3px;top:70px;width:14.7px;height:443px;background:#222"></div>
<div class="a" style="left:724px;top:78.6px;width:13.5px;height:426.5px;background:linear-gradient(to right,#333,#3c3c3c 50%,#333);border-radius:3px"></div>
<div class="a" style="left:724px;top:243px;width:14px;height:83.6px;background:#5e5e5e;border-radius:3px"></div>
<svg style="left:728px;top:71.8px;" width="6" height="4.5" viewBox="0 0 6 4.5"><path d="M0 4.5H6L3 0Z" fill="#b0b0b0"/></svg>
<svg style="left:728px;top:507px;" width="6" height="4.5" viewBox="0 0 6 4.5"><path d="M0 0H6L3 4.5Z" fill="#b0b0b0"/></svg>
<div class="a" style="left:194.9px;top:513px;width:543.1px;height:14.5px;background:#222"></div>
<div class="a" style="left:203.4px;top:513.5px;width:526px;height:13.5px;background:linear-gradient(#333,#3c3c3c 50%,#333);border-radius:3px"></div>
<div class="a" style="left:401.4px;top:513.7px;width:99.6px;height:13.8px;background:#5e5e5e;border-radius:3px"></div>
<svg style="left:196.5px;top:517.4px;" width="4.7" height="6" viewBox="0 0 4.7 6"><path d="M4.7 0V6L0 3Z" fill="#b0b0b0"/></svg>
<svg style="left:731.5px;top:517.4px;" width="4.7" height="6" viewBox="0 0 4.7 6"><path d="M0 0V6L4.7 3Z" fill="#b0b0b0"/></svg>
<div class="a" style="left:193px;top:527.5px;width:547px;height:3.5px;background:#3a3a3a"></div>
<div class="a" style="left:739.5px;top:54px;width:1.5px;height:477px;background:#151515"></div>
<div class="a" style="left:195px;top:70px;width:528px;height:443px;overflow:hidden"><div class="a" style="left:-195px;top:-70px;width:1024px;height:546px"><svg style="left:0;top:0" width="1024" height="546" viewBox="0 0 1024 546"><circle cx="307.2" cy="296.2" r="26.3" fill="#f5a6a6"/><circle cx="437.9" cy="286.9" r="26.3" fill="#f5a6a6"/><ellipse cx="307.2" cy="299.5" rx="8.6" ry="6.3" transform="rotate(-15 307.2 299.5)" fill="#efefef"/><ellipse cx="437" cy="286.3" rx="7.8" ry="6" transform="rotate(-15 437 286.3)" fill="#efefef"/><circle cx="326.1" cy="268.8" r="17.1" fill="#000"/><circle cx="413.1" cy="262.2" r="17.1" fill="#000"/><path d="M356.6 347.6C354.7 347.8 351.0 348.7 345.4 348.6C339.8 348.5 330.4 348.9 322.9 347.2C315.4 345.5 307.1 342.1 300.4 338.4C293.7 334.7 287.3 330.9 282.5 324.9C277.7 318.9 273.9 310.0 271.6 302.5C269.4 295.0 269.1 288.4 269.0 280.0C268.9 271.6 269.6 260.6 271.0 252.3C272.4 244.0 274.7 237.3 277.6 230.3C280.5 223.3 284.2 216.3 288.6 210.5C293.0 204.7 297.8 199.6 304.0 195.2C310.2 190.8 317.5 187.5 325.9 184.2C334.3 180.9 344.9 177.2 354.5 175.4C364.1 173.6 375.1 173.0 383.2 173.2C391.3 173.4 396.0 174.7 403.0 176.5C410.0 178.3 418.1 180.7 425.0 184.2C431.9 187.7 438.8 192.7 444.7 197.4C450.6 202.2 455.7 207.2 460.1 212.7C464.5 218.2 468.2 223.7 471.1 230.3C474.0 236.9 476.2 244.0 477.7 252.3C479.2 260.6 480.2 271.6 479.9 280.0C479.5 288.4 478.6 295.4 475.6 302.5C472.7 309.6 468.2 317.8 462.2 322.7C456.2 327.6 447.2 329.4 439.7 331.7C432.2 333.9 422.4 335.1 417.2 336.2C411.9 337.2 409.7 337.7 408.2 338.0" fill="none" stroke="#000" stroke-width="6.3" stroke-linejoin="round" stroke-linecap="round"/><path d="M344.2 384.4C344.6 382.6 345.3 377.4 346.3 373.5C347.3 369.6 348.3 365.3 350.0 361.0C351.7 356.7 355.5 349.8 356.6 347.6" fill="none" stroke="#000" stroke-width="6" stroke-linecap="round"/><path d="M408.2 338.0C409.7 340.3 414.3 347.3 417.2 351.9C420.1 356.5 423.4 360.9 425.5 365.4C427.6 369.9 428.9 376.6 429.6 378.8" fill="none" stroke="#000" stroke-width="6" stroke-linecap="round"/><path d="M362.5 296.5 C364 300.5 368 302 371 300.5 C373 299.5 374 298.5 374.5 298 C375.5 299.5 378 302 381 301.5 C383.5 301 385.5 299 386 296.5" fill="none" stroke="#000" stroke-width="2.2" stroke-linecap="round"/><path d="M368 301.5 C368 307 370.5 311.5 374.5 311.5 C378.5 311.5 380.5 307 380.5 301.5 C378 303 376 301 374.5 299.5 C373 301 370.5 303 368 301.5Z" fill="#e8202a" stroke="#000" stroke-width="1.6" stroke-linejoin="round"/><path d="M340.0 136.5C338.6 133.8 333.7 130.5 330.0 129.0C326.3 127.5 321.5 126.8 318.0 127.5C314.5 128.2 310.9 130.8 309.0 133.5C307.1 136.2 306.1 140.6 306.3 144.0C306.6 147.4 308.1 151.6 310.5 154.0C312.9 156.4 317.4 158.4 321.0 158.4C324.6 158.4 329.1 156.2 332.0 154.0C334.9 151.8 337.2 148.4 338.5 145.5C339.8 142.6 341.4 139.2 340.0 136.5Z" fill="#6fe66f" stroke="#000" stroke-width="7" stroke-linejoin="round"/><path d="M345.0 135.0C342.3 132.6 341.3 126.2 341.5 122.0C341.7 117.8 343.4 112.6 346.0 109.5C348.6 106.4 353.2 103.6 357.0 103.2C360.8 102.8 366.2 104.4 369.0 107.0C371.8 109.6 373.4 115.0 373.5 119.0C373.6 123.0 372.2 128.1 369.5 131.0C366.8 133.9 361.6 136.0 357.5 136.7C353.4 137.4 347.7 137.4 345.0 135.0Z" fill="#6fe66f" stroke="#000" stroke-width="6.8" stroke-linejoin="round"/><ellipse cx="341.5" cy="135" rx="5" ry="4.5" fill="#000"/><path d="M344 138L349.5 129.5" stroke="#000" stroke-width="5.5" stroke-linecap="round"/><path d="M345.0 136.0C346.1 137.8 349.7 142.7 351.5 146.5C353.3 150.3 354.9 154.6 356.0 159.0C357.1 163.4 357.7 170.7 358.0 173.0" fill="none" stroke="#000" stroke-width="6.2" stroke-linecap="round"/><path d="M461.3 343.9 L460.5 360.7 M460.2 351.7 C457.0 352.5 455.5 356.0 457.0 359.9 C458.2 361.4 459.8 361.0 460.5 360.3 M459.4 352.2 L471.1 352.6 M468.8 345.4 L468.8 363.0 M478.5 356.8 C475.0 354.8 471.9 357.5 472.7 361.0 C473.4 363.8 477.3 363.0 478.9 359.9 M479.3 356.0 L479.7 363.0 M483.6 356.8 L484.4 363.0 M487.5 363.0 L488.3 356.4 C490.6 354.8 494.5 356.0 495.3 358.3 L496.1 363.0 M498.4 363.0 C499.2 353.6 499.2 347.4 500.8 345.0 C503.9 343.5 504.7 348.2 503.1 352.1 L498.8 363.0 M500.0 357.5 C502.3 355.2 505.5 355.2 506.2 358.3 L507.0 363.0 M511.7 356.8 L512.5 363.0 M516.6 363.0 L517.0 356.8 C518.5 354.0 523.6 354.4 524.8 358.3 L525.2 363.0 M524.8 358.3 C526.7 354.0 531.8 354.4 533.4 358.3 L536.1 363.0 M546.2 350.5 L547.0 356.8 C541.6 356.8 540.8 363.0 544.7 363.8 C548.6 364.6 549.4 358.3 546.2 356.8 M547.0 354.8 L558.8 352.1 M557.6 361.4 C556.4 353.6 555.6 344.2 558.8 341.1 C562.7 339.6 564.2 345.0 561.1 349.7 L557.6 361.4 M558.0 356.8 C560.3 352.8 564.2 353.6 565.0 358.3 L565.6 362.2 M571.9 355.8 C568.1 355.8 567.7 362.8 571.9 362.8 C575.5 362.8 575.5 355.8 571.9 355.8 ZM575.9 363.0 L576.7 356.8 C577.5 353.6 581.4 353.6 581.8 357.5 L581.4 361.4 M581.8 357.5 C583.8 352.8 590.0 352.8 592.0 357.5 L592.0 363.0 M469.8 375.0 L469.1 391.4 M468.3 383.6 C464.4 382.8 462.0 386.8 464.4 390.7 C465.9 393.0 469.1 393.0 469.8 390.7 M466.7 383.2 L480.0 384.0 M476.9 376.2 L476.5 389.1 M490.9 379.3 L493.3 393.0 M490.9 386.0 C484.7 385.2 481.6 390.7 484.7 393.0 C487.8 394.6 491.7 393.0 492.5 390.7 M497.2 378.9 C501.1 376.6 505.0 378.9 503.4 383.6 C501.9 387.5 498.0 389.1 497.2 389.9 L502.7 390.7 M506.6 387.5 C505.0 381.3 509.7 380.5 511.2 383.6 L511.2 388.3 M511.2 378.2 L522.2 378.5 L521.0 389.1 M515.2 378.2 L515.5 387.5 " fill="none" stroke="#000" stroke-width="2.7" stroke-linecap="round" stroke-linejoin="round"/><circle cx="484.8" cy="350.9" r="1.5"/><circle cx="516.2" cy="347.6" r="1.5"/><circle cx="210.5" cy="281.5" r="2" fill="none" stroke="#222" stroke-width="0.8"/></svg></div></div>
<div class="a" style="left:742px;top:51.0px;width:282px;height:4.5px;background:linear-gradient(rgba(30,40,48,0),#1e2830 60%)"></div>
<div class="a" style="left:742px;top:55.0px;width:282px;height:1.2px;background:#5c7180"></div>
<div class="a" style="left:742px;top:56.2px;width:282px;height:14.8px;background:linear-gradient(#30353a,#3a3837 2px)"></div>
<div class="t" style="left:857.50px;top:59.04px;font-size:9.4px;color:#dadada;transform:scaleX(0.828);">Hoa tiêu</div>
<svg style="left:1001.5px;top:58.0px;" width="9" height="9" viewBox="0 0 9 9"><path d="M4.5 2H1.5V8H7.5V5" fill="none" stroke="#bfbfbf" stroke-width="1"/><path d="M5 4.5L8 1.5M6.3 1.5H8V3.2" fill="none" stroke="#bfbfbf" stroke-width="1"/></svg>
<svg style="left:1013.5px;top:59.0px;" width="7" height="7" viewBox="0 0 7 7"><path d="M1 1L6 6M6 1L1 6" stroke="#d8d8d8" stroke-width="1.9"/></svg>
<div class="a" style="left:742px;top:71px;width:282px;height:22px;background:#262626"></div>
<div class="b" style="left:745px;top:73px;width:17.3px;height:18px;background:#4a4a4a"></div>
<svg style="left:744.90px;top:73.50px" width="17.5" height="17" viewBox="0 0 17.5 17"><circle cx="7.6" cy="7.6" r="3.8" fill="none" stroke="#e0e0e0" stroke-width="1.3"/><path d="M10.4 10.4L13.2 13.2" fill="none" stroke="#e8e8e8" stroke-width="1.7" stroke-linecap="round" stroke-linejoin="round" /><path d="M6.9 6.6L7.9 5.9V9.3" fill="none" stroke="#e8e8e8" stroke-width="1.1" stroke-linecap="round" stroke-linejoin="round" /></svg>
<div class="b" style="left:770px;top:73px;width:17.3px;height:18px;background:#4a4a4a"></div>
<svg style="left:769.90px;top:73.50px" width="17.5" height="17" viewBox="0 0 17.5 17"><circle cx="7.6" cy="7.6" r="3.8" fill="none" stroke="#e0e0e0" stroke-width="1.3"/><path d="M10.4 10.4L13.2 13.2" fill="none" stroke="#e8e8e8" stroke-width="1.7" stroke-linecap="round" stroke-linejoin="round" /><path d="M5.9 7.6H9.3M7.6 5.9V9.3" fill="none" stroke="#e8e8e8" stroke-width="1.1" stroke-linecap="round" stroke-linejoin="round" /></svg>
<div class="b" style="left:791px;top:73px;width:17.3px;height:18px;background:#4a4a4a"></div>
<svg style="left:790.90px;top:73.50px" width="17.5" height="17" viewBox="0 0 17.5 17"><path d="M3.5 3.8H13.8V13.2H3.5Z" fill="#dcdcdc" /><path d="M4.8 7.2L7.2 8.5L4.8 9.8ZM12.5 7.2L10.1 8.5L12.5 9.8ZM7.3 5L8.65 7.3L10 5ZM7.3 12L8.65 9.7L10 12Z" fill="#3a3a3a" /><path d="M5 8.5H12.3M8.65 5.2V11.8" fill="none" stroke="#3a3a3a" stroke-width="1.1" stroke-linecap="round" stroke-linejoin="round" /></svg>
<div class="b" style="left:811px;top:73px;width:17.3px;height:18px;background:#4a4a4a"></div>
<svg style="left:810.90px;top:73.50px" width="17.5" height="17" viewBox="0 0 17.5 17"><circle cx="7.6" cy="7.6" r="3.8" fill="none" stroke="#e0e0e0" stroke-width="1.3"/><path d="M10.4 10.4L13.2 13.2" fill="none" stroke="#e8e8e8" stroke-width="1.7" stroke-linecap="round" stroke-linejoin="round" /><path d="M5.9 7.6H9.3" fill="none" stroke="#e8e8e8" stroke-width="1.1" stroke-linecap="round" stroke-linejoin="round" /></svg>
<div class="b" style="left:837px;top:73px;width:17.3px;height:18px;background:#4a4a4a"></div>
<svg style="left:836.90px;top:73.50px" width="17.5" height="17" viewBox="0 0 17.5 17"><path d="M5 5.2A4.6 4.6 0 1 0 8.65 3.9" fill="none" stroke="#e8e8e8" stroke-width="1.4" stroke-linecap="round" stroke-linejoin="round" /><path d="M3.3 4L6.8 3.4L5.2 6.6Z" fill="#e8e8e8" /><path d="M6.3 7.2L9.6 6.2L10.8 9.5L7.5 10.6Z" fill="#d8d8d8" /></svg>
<div class="b" style="left:857px;top:73px;width:17.3px;height:18px;background:#262626;border:1px solid #474747"></div>
<svg style="left:856.90px;top:73.50px" width="17.5" height="17" viewBox="0 0 17.5 17"><path d="M5.5 5.3H11.8V11.7H5.5Z" fill="#e8e8e8" /><path d="M3.2 3L5.2 5M14.1 3L12.1 5M3.2 14L5.2 12M14.1 14L12.1 12" fill="none" stroke="#e8e8e8" stroke-width="1.1" stroke-linecap="round" stroke-linejoin="round" /></svg>
<div class="b" style="left:877px;top:73px;width:17.3px;height:18px;background:#4a4a4a"></div>
<svg style="left:876.90px;top:73.50px" width="17.5" height="17" viewBox="0 0 17.5 17"><path d="M12.3 5.2A4.6 4.6 0 1 1 8.65 3.9" fill="none" stroke="#e8e8e8" stroke-width="1.4" stroke-linecap="round" stroke-linejoin="round" /><path d="M14 4L10.5 3.4L12.1 6.6Z" fill="#e8e8e8" /><path d="M6.3 7.2L9.6 6.2L10.8 9.5L7.5 10.6Z" fill="#d8d8d8" /></svg>
<div class="b" style="left:902.5px;top:73px;width:17.3px;height:18px;background:#4a4a4a"></div>
<svg style="left:902.40px;top:73.50px" width="17.5" height="17" viewBox="0 0 17.5 17"><path d="M3.8 7.3H7.3V13.3H3.8Z" fill="#e8e8e8" /><path d="M10.3 7.3H13.6V13.3H10.3Z" fill="none" stroke="#e8e8e8" stroke-width="1.1" stroke-linecap="round" stroke-linejoin="round" /><path d="M8.65 5V14" fill="none" stroke="#e8e8e8" stroke-width="0.8" stroke-linecap="round" stroke-linejoin="round" /><path d="M5.5 6.3C5.8 3.8 7 3 8.65 3C10.3 3 11.5 3.8 11.8 6.3" fill="none" stroke="#e8e8e8" stroke-width="1" stroke-linecap="round" stroke-linejoin="round" /></svg>
<div class="a" style="left:766px;top:77px;width:1px;height:9px;background:#4a4a4a"></div>
<div class="a" style="left:832px;top:77px;width:1px;height:9px;background:#4a4a4a"></div>
<div class="a" style="left:898px;top:77px;width:1px;height:9px;background:#4a4a4a"></div>
<div class="a" style="left:742px;top:93px;width:282px;height:34px;background:#474747"></div>
<div class="a" style="left:861px;top:94px;width:44px;height:33px;background:#fff"></div>
<div class="a" style="left:870.5px;top:101.8px;width:18.3px;height:14.7px;overflow:hidden"><div class="a" style="left:0;top:0;width:1024px;height:546px;transform-origin:0 0;transform:scale(0.0347) translate(-195px,-70px)"><svg style="left:0;top:0" width="1024" height="546" viewBox="0 0 1024 546"><circle cx="307.2" cy="296.2" r="26.3" fill="#f5a6a6"/><circle cx="437.9" cy="286.9" r="26.3" fill="#f5a6a6"/><ellipse cx="307.2" cy="299.5" rx="8.6" ry="6.3" transform="rotate(-15 307.2 299.5)" fill="#efefef"/><ellipse cx="437" cy="286.3" rx="7.8" ry="6" transform="rotate(-15 437 286.3)" fill="#efefef"/><circle cx="326.1" cy="268.8" r="17.1" fill="#000"/><circle cx="413.1" cy="262.2" r="17.1" fill="#000"/><path d="M356.6 347.6C354.7 347.8 351.0 348.7 345.4 348.6C339.8 348.5 330.4 348.9 322.9 347.2C315.4 345.5 307.1 342.1 300.4 338.4C293.7 334.7 287.3 330.9 282.5 324.9C277.7 318.9 273.9 310.0 271.6 302.5C269.4 295.0 269.1 288.4 269.0 280.0C268.9 271.6 269.6 260.6 271.0 252.3C272.4 244.0 274.7 237.3 277.6 230.3C280.5 223.3 284.2 216.3 288.6 210.5C293.0 204.7 297.8 199.6 304.0 195.2C310.2 190.8 317.5 187.5 325.9 184.2C334.3 180.9 344.9 177.2 354.5 175.4C364.1 173.6 375.1 173.0 383.2 173.2C391.3 173.4 396.0 174.7 403.0 176.5C410.0 178.3 418.1 180.7 425.0 184.2C431.9 187.7 438.8 192.7 444.7 197.4C450.6 202.2 455.7 207.2 460.1 212.7C464.5 218.2 468.2 223.7 471.1 230.3C474.0 236.9 476.2 244.0 477.7 252.3C479.2 260.6 480.2 271.6 479.9 280.0C479.5 288.4 478.6 295.4 475.6 302.5C472.7 309.6 468.2 317.8 462.2 322.7C456.2 327.6 447.2 329.4 439.7 331.7C432.2 333.9 422.4 335.1 417.2 336.2C411.9 337.2 409.7 337.7 408.2 338.0" fill="none" stroke="#000" stroke-width="6.3" stroke-linejoin="round" stroke-linecap="round"/><path d="M344.2 384.4C344.6 382.6 345.3 377.4 346.3 373.5C347.3 369.6 348.3 365.3 350.0 361.0C351.7 356.7 355.5 349.8 356.6 347.6" fill="none" stroke="#000" stroke-width="6" stroke-linecap="round"/><path d="M408.2 338.0C409.7 340.3 414.3 347.3 417.2 351.9C420.1 356.5 423.4 360.9 425.5 365.4C427.6 369.9 428.9 376.6 429.6 378.8" fill="none" stroke="#000" stroke-width="6" stroke-linecap="round"/><path d="M362.5 296.5 C364 300.5 368 302 371 300.5 C373 299.5 374 298.5 374.5 298 C375.5 299.5 378 302 381 301.5 C383.5 301 385.5 299 386 296.5" fill="none" stroke="#000" stroke-width="2.2" stroke-linecap="round"/><path d="M368 301.5 C368 307 370.5 311.5 374.5 311.5 C378.5 311.5 380.5 307 380.5 301.5 C378 303 376 301 374.5 299.5 C373 301 370.5 303 368 301.5Z" fill="#e8202a" stroke="#000" stroke-width="1.6" stroke-linejoin="round"/><path d="M340.0 136.5C338.6 133.8 333.7 130.5 330.0 129.0C326.3 127.5 321.5 126.8 318.0 127.5C314.5 128.2 310.9 130.8 309.0 133.5C307.1 136.2 306.1 140.6 306.3 144.0C306.6 147.4 308.1 151.6 310.5 154.0C312.9 156.4 317.4 158.4 321.0 158.4C324.6 158.4 329.1 156.2 332.0 154.0C334.9 151.8 337.2 148.4 338.5 145.5C339.8 142.6 341.4 139.2 340.0 136.5Z" fill="#6fe66f" stroke="#000" stroke-width="7" stroke-linejoin="round"/><path d="M345.0 135.0C342.3 132.6 341.3 126.2 341.5 122.0C341.7 117.8 343.4 112.6 346.0 109.5C348.6 106.4 353.2 103.6 357.0 103.2C360.8 102.8 366.2 104.4 369.0 107.0C371.8 109.6 373.4 115.0 373.5 119.0C373.6 123.0 372.2 128.1 369.5 131.0C366.8 133.9 361.6 136.0 357.5 136.7C353.4 137.4 347.7 137.4 345.0 135.0Z" fill="#6fe66f" stroke="#000" stroke-width="6.8" stroke-linejoin="round"/><ellipse cx="341.5" cy="135" rx="5" ry="4.5" fill="#000"/><path d="M344 138L349.5 129.5" stroke="#000" stroke-width="5.5" stroke-linecap="round"/><path d="M345.0 136.0C346.1 137.8 349.7 142.7 351.5 146.5C353.3 150.3 354.9 154.6 356.0 159.0C357.1 163.4 357.7 170.7 358.0 173.0" fill="none" stroke="#000" stroke-width="6.2" stroke-linecap="round"/><path d="M461.3 343.9 L460.5 360.7 M460.2 351.7 C457.0 352.5 455.5 356.0 457.0 359.9 C458.2 361.4 459.8 361.0 460.5 360.3 M459.4 352.2 L471.1 352.6 M468.8 345.4 L468.8 363.0 M478.5 356.8 C475.0 354.8 471.9 357.5 472.7 361.0 C473.4 363.8 477.3 363.0 478.9 359.9 M479.3 356.0 L479.7 363.0 M483.6 356.8 L484.4 363.0 M487.5 363.0 L488.3 356.4 C490.6 354.8 494.5 356.0 495.3 358.3 L496.1 363.0 M498.4 363.0 C499.2 353.6 499.2 347.4 500.8 345.0 C503.9 343.5 504.7 348.2 503.1 352.1 L498.8 363.0 M500.0 357.5 C502.3 355.2 505.5 355.2 506.2 358.3 L507.0 363.0 M511.7 356.8 L512.5 363.0 M516.6 363.0 L517.0 356.8 C518.5 354.0 523.6 354.4 524.8 358.3 L525.2 363.0 M524.8 358.3 C526.7 354.0 531.8 354.4 533.4 358.3 L536.1 363.0 M546.2 350.5 L547.0 356.8 C541.6 356.8 540.8 363.0 544.7 363.8 C548.6 364.6 549.4 358.3 546.2 356.8 M547.0 354.8 L558.8 352.1 M557.6 361.4 C556.4 353.6 555.6 344.2 558.8 341.1 C562.7 339.6 564.2 345.0 561.1 349.7 L557.6 361.4 M558.0 356.8 C560.3 352.8 564.2 353.6 565.0 358.3 L565.6 362.2 M571.9 355.8 C568.1 355.8 567.7 362.8 571.9 362.8 C575.5 362.8 575.5 355.8 571.9 355.8 ZM575.9 363.0 L576.7 356.8 C577.5 353.6 581.4 353.6 581.8 357.5 L581.4 361.4 M581.8 357.5 C583.8 352.8 590.0 352.8 592.0 357.5 L592.0 363.0 M469.8 375.0 L469.1 391.4 M468.3 383.6 C464.4 382.8 462.0 386.8 464.4 390.7 C465.9 393.0 469.1 393.0 469.8 390.7 M466.7 383.2 L480.0 384.0 M476.9 376.2 L476.5 389.1 M490.9 379.3 L493.3 393.0 M490.9 386.0 C484.7 385.2 481.6 390.7 484.7 393.0 C487.8 394.6 491.7 393.0 492.5 390.7 M497.2 378.9 C501.1 376.6 505.0 378.9 503.4 383.6 C501.9 387.5 498.0 389.1 497.2 389.9 L502.7 390.7 M506.6 387.5 C505.0 381.3 509.7 380.5 511.2 383.6 L511.2 388.3 M511.2 378.2 L522.2 378.5 L521.0 389.1 M515.2 378.2 L515.5 387.5 " fill="none" stroke="#000" stroke-width="2.7" stroke-linecap="round" stroke-linejoin="round"/><circle cx="484.8" cy="350.9" r="1.5"/><circle cx="516.2" cy="347.6" r="1.5"/><circle cx="210.5" cy="281.5" r="2" fill="none" stroke="#222" stroke-width="0.8"/></svg></div></div>
<div class="a" style="left:870.5px;top:101.8px;width:18.3px;height:14.7px;border:1.8px solid #d42020"></div>
<div class="a" style="left:742px;top:126.0px;width:282px;height:4.5px;background:linear-gradient(rgba(30,40,48,0),#1e2830 60%)"></div>
<div class="a" style="left:742px;top:130.0px;width:282px;height:1.2px;background:#5c7180"></div>
<div class="a" style="left:742px;top:131.2px;width:282px;height:14.8px;background:linear-gradient(#30353a,#3a3837 2px)"></div>
<div class="t" style="left:865.50px;top:134.04px;font-size:9.4px;color:#dadada;transform:scaleX(0.781);">Lớp</div>
<svg style="left:1001.5px;top:133.0px;" width="9" height="9" viewBox="0 0 9 9"><path d="M4.5 2H1.5V8H7.5V5" fill="none" stroke="#bfbfbf" stroke-width="1"/><path d="M5 4.5L8 1.5M6.3 1.5H8V3.2" fill="none" stroke="#bfbfbf" stroke-width="1"/></svg>
<svg style="left:1013.5px;top:134.0px;" width="7" height="7" viewBox="0 0 7 7"><path d="M1 1L6 6M6 1L1 6" stroke="#d8d8d8" stroke-width="1.9"/></svg>
<div class="a" style="left:742px;top:146.5px;width:282px;height:170px;background:#232323"></div>
<div class="t" style="left:746.40px;top:152.54px;font-size:9.4px;color:#d0d0d0;transform:scaleX(0.832);">Độ trong</div>
<div class="a" style="left:817px;top:151.4px;width:164.8px;height:10.9px;background:linear-gradient(to right,#7cc0f0,#4f98d8)"></div>
<div class="t" style="left:986.80px;top:152.54px;font-size:9.4px;color:#d0d0d0;transform:scaleX(0.863);">100 %</div>
<div class="t" style="left:746.40px;top:171.54px;font-size:9.4px;color:#d0d0d0;transform:scaleX(0.788);">Pha trộn</div>
<div class="a" style="left:818.7px;top:167.9px;width:200px;height:15.4px;background:#3f3f3f"></div>
<div class="t" style="left:821.00px;top:171.54px;font-size:9.4px;color:#c8c8c8;transform:scaleX(0.835);">Bình thường</div>
<svg style="left:1009px;top:174px;" width="7" height="4" viewBox="0 0 7 4"><path d="M0 0H7L3.5 4Z" fill="#aaa"/></svg>
<div class="a" style="left:749px;top:191.4px;width:8px;height:8.4px;border:1px solid #c8c8c8"></div>
<div class="t" style="left:760.50px;top:191.04px;font-size:9.4px;color:#d0d0d0;transform:scaleX(0.838);">Bảo vệ alpha</div>
<div class="a" style="left:841px;top:191.4px;width:8px;height:8.4px;border:1px solid #5a5a5a"></div>
<div class="t" style="left:852.50px;top:191.04px;font-size:9.4px;color:#7a7a7a;transform:scaleX(0.840);">Xén bớt</div>
<div class="a" style="left:934px;top:191.4px;width:8px;height:8.4px;border:1px solid #c8c8c8"></div>
<div class="t" style="left:945.50px;top:191.04px;font-size:9.4px;color:#d0d0d0;transform:scaleX(0.909);">Khóa</div>
<div class="a" style="left:742px;top:204px;width:266px;height:85px;background:#474543"></div>
<div class="a" style="left:744px;top:206.2px;width:14.3px;height:28.5px;background:#5a5a5a"></div>
<div class="a" style="left:758.3px;top:206.2px;width:249px;height:28.5px;background:#4b96d8"></div>
<svg style="left:746px;top:215px;" width="10" height="10" viewBox="0 0 10 10"><circle cx="5" cy="5" r="3.3" fill="#ddd"/></svg>
<div class="a" style="left:769.7px;top:211.3px;width:25.4px;height:18.7px;background-color:#fff;background-image:linear-gradient(45deg,#eee 25%,transparent 25%,transparent 75%,#eee 75%),linear-gradient(45deg,#eee 25%,transparent 25%,transparent 75%,#eee 75%);background-size:5px 5px;background-position:0 0,2.5px 2.5px"></div>
<svg style="left:0;top:0" width="1024" height="546"><path d="M776 222.5C776.5 219 777.5 216.5 779.2 215.5C781 216.5 782 219 782.5 222.5M777 220.5H781.5" fill="none" stroke="#8a8a8a" stroke-width="0.9"/></svg>
<div class="t" style="left:808.00px;top:216.03px;font-size:10px;color:#ffffff;transform:scaleX(0.944);font-weight:bold;">Lớp1</div>
<svg style="left:990px;top:214px;" width="15" height="15" viewBox="0 0 15 15"><g fill="#fff"><circle cx="7.5" cy="7.5" r="5"/><rect x="6" y="0.5" width="3" height="4" transform="rotate(0 7.5 7.5)"/><rect x="6" y="0.5" width="3" height="4" transform="rotate(45 7.5 7.5)"/><rect x="6" y="0.5" width="3" height="4" transform="rotate(90 7.5 7.5)"/><rect x="6" y="0.5" width="3" height="4" transform="rotate(135 7.5 7.5)"/><rect x="6" y="0.5" width="3" height="4" transform="rotate(180 7.5 7.5)"/><rect x="6" y="0.5" width="3" height="4" transform="rotate(225 7.5 7.5)"/><rect x="6" y="0.5" width="3" height="4" transform="rotate(270 7.5 7.5)"/><rect x="6" y="0.5" width="3" height="4" transform="rotate(315 7.5 7.5)"/></g><circle cx="7.5" cy="7.5" r="1.2" fill="#4b96d8"/></svg>
<div class="a" style="left:1008.2px;top:204px;width:14.3px;height:85px;background:#262626"></div>
<div class="a" style="left:1009px;top:214.3px;width:12.5px;height:65px;background:#666;border-radius:4px"></div>
<svg style="left:1012px;top:205.5px;" width="7" height="6" viewBox="0 0 7 6"><path d="M0 5H7L3.5 0Z" fill="#b5b5b5"/></svg>
<svg style="left:1012px;top:281.5px;" width="7" height="6" viewBox="0 0 7 6"><path d="M0 0H7L3.5 5Z" fill="#b5b5b5"/></svg>
<div class="b" style="left:747.7px;top:292px;width:16px;height:16.6px;background:#4a4a4a"></div>
<svg style="left:747.45px;top:291.80px" width="16.5" height="17" viewBox="0 0 16.5 17"><path d="M4.5 2.5H9.8L12 4.7V14H4.5Z" fill="none" stroke="#e8e8e8" stroke-width="1.1" stroke-linecap="round" stroke-linejoin="round" /></svg>
<div class="b" style="left:767.5px;top:292px;width:16px;height:16.6px;background:#4a4a4a"></div>
<svg style="left:767.25px;top:291.80px" width="16.5" height="17" viewBox="0 0 16.5 17"><path d="M4.5 2.5H9.8L12 4.7V14H4.5Z" fill="none" stroke="#e8e8e8" stroke-width="1.1" stroke-linecap="round" stroke-linejoin="round" /><circle cx="8.25" cy="8" r="1.3" fill="none" stroke="#e8e8e8" stroke-width="0.9"/><circle cx="8.25" cy="10.7" r="1.5" fill="none" stroke="#e8e8e8" stroke-width="0.9"/></svg>
<div class="b" style="left:787px;top:292px;width:16.7px;height:16.6px;background:#4a4a4a"></div>
<svg style="left:787.10px;top:291.80px" width="16.5" height="17" viewBox="0 0 16.5 17"><path d="M4.5 2.5H9.8L12 4.7V14H4.5Z" fill="none" stroke="#e8e8e8" stroke-width="1.1" stroke-linecap="round" stroke-linejoin="round" /><path d="M7.3 7.5L8.5 6.8V12.2" fill="none" stroke="#e8e8e8" stroke-width="1" stroke-linecap="round" stroke-linejoin="round" /></svg>
<div class="b" style="left:807px;top:292px;width:23px;height:16.6px;background:#4a4a4a"></div>
<svg style="left:807.50px;top:291.80px" width="22" height="17" viewBox="0 0 22 17"><path d="M3.5 2.5H8.8L11 4.7V9M3.5 2.5V14H7" fill="none" stroke="#e8e8e8" stroke-width="1.1" stroke-linecap="round" stroke-linejoin="round" /><path d="M9.5 10V15M7 12.5H12" fill="none" stroke="#e8e8e8" stroke-width="1.3" stroke-linecap="round" stroke-linejoin="round" /><path d="M15.5 7.5H20.5L18 10.5Z" fill="#e8e8e8" /></svg>
<div class="b" style="left:833.4px;top:292px;width:16.6px;height:16.6px;background:#4a4a4a"></div>
<svg style="left:833.45px;top:291.80px" width="16.5" height="17" viewBox="0 0 16.5 17"><path d="M3 5H7L8.3 6.3H14V13H3Z" fill="#e8e8e8" /></svg>
<div class="b" style="left:858.7px;top:292px;width:16.3px;height:16.6px;background:#4a4a4a"></div>
<svg style="left:858.60px;top:291.80px" width="16.5" height="17" viewBox="0 0 16.5 17"><path d="M7 3.5H12.8V9.5H7Z" fill="none" stroke="#e8e8e8" stroke-width="1.1" stroke-linecap="round" stroke-linejoin="round" /><rect x="4" y="6.5" width="5.8" height="6" fill="#4a4a4a" stroke="#e8e8e8" stroke-width="1.1"/></svg>
<div class="b" style="left:879px;top:292px;width:16.6px;height:16.6px;background:#262626;border:1px solid #474747"></div>
<svg style="left:879.05px;top:291.80px" width="16.5" height="17" viewBox="0 0 16.5 17"><path d="M3 3.5H8V6.5H3ZM3 10.5H8V13.5H3ZM9.5 6.5H14V10.5H9.5Z" fill="#e8e8e8" /><path d="M8 5H9M8 12H9" fill="none" stroke="#e8e8e8" stroke-width="1" stroke-linecap="round" stroke-linejoin="round" /></svg>
<div class="b" style="left:902px;top:292px;width:16.6px;height:16.6px;background:#262626;border:1px solid #474747"></div>
<svg style="left:902.05px;top:291.80px" width="16.5" height="17" viewBox="0 0 16.5 17"><path d="M4 5H13M6.8 5V3.8H10.2V5M4.8 5.5V13.8H12.2V5.5M6.8 7V12.3M8.5 7V12.3M10.2 7V12.3" fill="none" stroke="#e8e8e8" stroke-width="1.2" stroke-linecap="round" stroke-linejoin="round" /></svg>
<div class="a" style="left:854px;top:295px;width:1px;height:10px;background:#4a4a4a"></div>
<div class="a" style="left:898.5px;top:295px;width:1px;height:10px;background:#4a4a4a"></div>
<div class="a" style="left:742px;top:313.0px;width:282px;height:4.5px;background:linear-gradient(rgba(30,40,48,0),#1e2830 60%)"></div>
<div class="a" style="left:742px;top:317.0px;width:282px;height:1.2px;background:#5c7180"></div>
<div class="a" style="left:742px;top:318.2px;width:282px;height:14.8px;background:linear-gradient(#30353a,#3a3837 2px)"></div>
<div class="t" style="left:853.25px;top:321.04px;font-size:9.4px;color:#dadada;transform:scaleX(0.864);">Reference</div>
<svg style="left:1001.5px;top:320.0px;" width="9" height="9" viewBox="0 0 9 9"><path d="M4.5 2H1.5V8H7.5V5" fill="none" stroke="#bfbfbf" stroke-width="1"/><path d="M5 4.5L8 1.5M6.3 1.5H8V3.2" fill="none" stroke="#bfbfbf" stroke-width="1"/></svg>
<svg style="left:1013.5px;top:321.0px;" width="7" height="7" viewBox="0 0 7 7"><path d="M1 1L6 6M6 1L1 6" stroke="#d8d8d8" stroke-width="1.9"/></svg>
<div class="a" style="left:742px;top:333px;width:282px;height:22px;background:#262626"></div>
<div class="b" style="left:745.5px;top:336px;width:16.6px;height:16.8px;background:#4a4a4a"></div>
<svg style="left:745.55px;top:335.90px" width="16.5" height="17" viewBox="0 0 16.5 17"><path d="M3.8 9H12.5a2.3 2.3 0 0 0 .2-4.6A3.2 3.2 0 0 0 6.6 3.5 2.2 2.2 0 0 0 3.8 9Z" fill="#e8e8e8" /><path d="M6.8 7H9.8V11.5H11.6L8.3 15L5 11.5H6.8Z" fill="#e8e8e8" stroke="#4a4a4a" stroke-width="0.8"/></svg>
<div class="b" style="left:765px;top:336px;width:16.6px;height:16.8px;background:#4a4a4a"></div>
<svg style="left:765.05px;top:335.90px" width="16.5" height="17" viewBox="0 0 16.5 17"><path d="M2.8 4.5H6.5L7.8 5.8H12.5V7.5H5.5L3.5 13H2.8Z" fill="#e8e8e8" /><path d="M5.2 8.3H15L13 13H3.2Z" fill="#e8e8e8" /></svg>
<div class="b" style="left:786px;top:336px;width:16.6px;height:16.8px;background:#262626;border:1px solid #474747"></div>
<svg style="left:786.05px;top:335.90px" width="16.5" height="17" viewBox="0 0 16.5 17"><path d="M5.5 5.5L11 11M11 5.5L5.5 11" fill="none" stroke="#e8e8e8" stroke-width="1.7" stroke-linecap="round" stroke-linejoin="round" /></svg>
<div class="b" style="left:811.4px;top:336px;width:16.6px;height:16.8px;background:#262626;border:1px solid #474747"></div>
<svg style="left:811.45px;top:335.90px" width="16.5" height="17" viewBox="0 0 16.5 17"><circle cx="7.6" cy="7.6" r="3.8" fill="none" stroke="#e0e0e0" stroke-width="1.3"/><path d="M10.4 10.4L13.2 13.2" fill="none" stroke="#e8e8e8" stroke-width="1.7" stroke-linecap="round" stroke-linejoin="round" /><path d="M5.9 7.6H9.3M7.6 5.9V9.3" fill="none" stroke="#e8e8e8" stroke-width="1.1" stroke-linecap="round" stroke-linejoin="round" /></svg>
<div class="b" style="left:832px;top:336px;width:16.6px;height:16.8px;background:#262626;border:1px solid #474747"></div>
<svg style="left:832.05px;top:335.90px" width="16.5" height="17" viewBox="0 0 16.5 17"><path d="M3.5 3.8H13.8V13.2H3.5Z" fill="none" stroke="#e8e8e8" stroke-width="1" stroke-linecap="round" stroke-linejoin="round" /><path d="M4.5 4.8L7.5 6L6 7.5ZM12.8 4.8L9.8 6L11.3 7.5ZM4.5 12.2L7.5 11L6 9.5ZM12.8 12.2L9.8 11L11.3 9.5Z" fill="#e8e8e8" /><path d="M5 5.3L7 7.3M12.3 5.3L10.3 7.3M5 11.7L7 9.7M12.3 11.7L10.3 9.7" fill="none" stroke="#e8e8e8" stroke-width="1" stroke-linecap="round" stroke-linejoin="round" /></svg>
<div class="b" style="left:851.6px;top:336px;width:16.6px;height:16.8px;background:#262626;border:1px solid #474747"></div>
<svg style="left:851.65px;top:335.90px" width="16.5" height="17" viewBox="0 0 16.5 17"><circle cx="7.6" cy="7.6" r="3.8" fill="none" stroke="#e0e0e0" stroke-width="1.3"/><path d="M10.4 10.4L13.2 13.2" fill="none" stroke="#e8e8e8" stroke-width="1.7" stroke-linecap="round" stroke-linejoin="round" /><path d="M5.9 7.6H9.3" fill="none" stroke="#e8e8e8" stroke-width="1.1" stroke-linecap="round" stroke-linejoin="round" /></svg>
<div class="b" style="left:877.3px;top:336px;width:16.6px;height:16.8px;background:#262626;border:1px solid #474747"></div>
<svg style="left:877.35px;top:335.90px" width="16.5" height="17" viewBox="0 0 16.5 17"><path d="M3.8 13.2L4.5 10.5L11.5 3.5L13.5 5.5L6.5 12.5Z" fill="none" stroke="#e8e8e8" stroke-width="1.2" stroke-linecap="round" stroke-linejoin="round" /><path d="M10 5L12 7" fill="none" stroke="#e8e8e8" stroke-width="1.2" stroke-linecap="round" stroke-linejoin="round" /></svg>
<div class="b" style="left:897.2px;top:336px;width:17px;height:16.8px;background:#55a1e3"></div>
<svg style="left:896.0px;top:335px" width="20" height="20" viewBox="0 0 20 20" ><path d="M7.6 11.5V5.2M9.9 11V3.6M12.2 11V4.2M14.4 11.5V6.2" fill="none" stroke="#ececec" stroke-width="1.45" stroke-linecap="round" stroke-linejoin="round" /><path d="M6.9 11H15.1V13.2C15.1 15.6 13.5 17.4 11 17.4H10.2C8.7 17.4 7.8 16.7 7 15.6L3.9 12.2C3.3 11.4 4.2 10.5 5 11.1L6.9 12.6Z" fill="#ececec" /></svg>
<div class="b" style="left:923.3px;top:336px;width:16.6px;height:16.8px;background:#262626;border:1px solid #474747"></div>
<svg style="left:923.35px;top:335.90px" width="16.5" height="17" viewBox="0 0 16.5 17"><path d="M5 5.2A4.6 4.6 0 1 0 8.65 3.9" fill="none" stroke="#e8e8e8" stroke-width="1.4" stroke-linecap="round" stroke-linejoin="round" /><path d="M3.3 4L6.8 3.4L5.2 6.6Z" fill="#e8e8e8" /><path d="M6.3 7.2L9.6 6.2L10.8 9.5L7.5 10.6Z" fill="#d8d8d8" /></svg>
<div class="b" style="left:943.3px;top:336px;width:16.6px;height:16.8px;background:#262626;border:1px solid #474747"></div>
<svg style="left:943.35px;top:335.90px" width="16.5" height="17" viewBox="0 0 16.5 17"><path d="M5.5 5.3H11.8V11.7H5.5Z" fill="#e8e8e8" /><path d="M3.2 3L5.2 5M14.1 3L12.1 5M3.2 14L5.2 12M14.1 14L12.1 12" fill="none" stroke="#e8e8e8" stroke-width="1.1" stroke-linecap="round" stroke-linejoin="round" /></svg>
<div class="b" style="left:963.3px;top:336px;width:16.6px;height:16.8px;background:#262626;border:1px solid #474747"></div>
<svg style="left:963.35px;top:335.90px" width="16.5" height="17" viewBox="0 0 16.5 17"><path d="M12.3 5.2A4.6 4.6 0 1 1 8.65 3.9" fill="none" stroke="#e8e8e8" stroke-width="1.4" stroke-linecap="round" stroke-linejoin="round" /><path d="M14 4L10.5 3.4L12.1 6.6Z" fill="#e8e8e8" /><path d="M6.3 7.2L9.6 6.2L10.8 9.5L7.5 10.6Z" fill="#d8d8d8" /></svg>
<div class="b" style="left:989.4px;top:336px;width:16.6px;height:16.8px;background:#262626;border:1px solid #474747"></div>
<svg style="left:989.45px;top:335.90px" width="16.5" height="17" viewBox="0 0 16.5 17"><path d="M3.8 7.3H7.3V13.3H3.8Z" fill="#e8e8e8" /><path d="M10.3 7.3H13.6V13.3H10.3Z" fill="none" stroke="#e8e8e8" stroke-width="1.1" stroke-linecap="round" stroke-linejoin="round" /><path d="M8.65 5V14" fill="none" stroke="#e8e8e8" stroke-width="0.8" stroke-linecap="round" stroke-linejoin="round" /><path d="M5.5 6.3C5.8 3.8 7 3 8.65 3C10.3 3 11.5 3.8 11.8 6.3" fill="none" stroke="#e8e8e8" stroke-width="1" stroke-linecap="round" stroke-linejoin="round" /></svg>
<div class="a" style="left:807px;top:339.5px;width:1px;height:10px;background:#4a4a4a"></div>
<div class="a" style="left:872px;top:339.5px;width:1px;height:10px;background:#4a4a4a"></div>
<div class="a" style="left:918.5px;top:339.5px;width:1px;height:10px;background:#4a4a4a"></div>
<div class="a" style="left:984.6px;top:339.5px;width:1px;height:10px;background:#4a4a4a"></div>
<div class="a" style="left:742px;top:355.8px;width:282px;height:33px;background-color:#fafafa;background-image:linear-gradient(45deg,#ededed 25%,transparent 25%,transparent 75%,#ededed 75%),linear-gradient(45deg,#ededed 25%,transparent 25%,transparent 75%,#ededed 75%);background-size:10px 10px;background-position:0 0,5px 5px"></div>
<div class="a" style="left:742px;top:387.7px;width:282px;height:4.5px;background:linear-gradient(rgba(30,40,48,0),#1e2830 60%)"></div>
<div class="a" style="left:742px;top:391.7px;width:282px;height:1.2px;background:#5c7180"></div>
<div class="a" style="left:742px;top:392.9px;width:282px;height:14.8px;background:linear-gradient(#30353a,#3a3837 2px)"></div>
<div class="t" style="left:853.70px;top:395.74px;font-size:9.4px;color:#dadada;transform:scaleX(0.805);">Brush Size</div>
<svg style="left:1001.5px;top:394.7px;" width="9" height="9" viewBox="0 0 9 9"><path d="M4.5 2H1.5V8H7.5V5" fill="none" stroke="#bfbfbf" stroke-width="1"/><path d="M5 4.5L8 1.5M6.3 1.5H8V3.2" fill="none" stroke="#bfbfbf" stroke-width="1"/></svg>
<svg style="left:1013.5px;top:395.7px;" width="7" height="7" viewBox="0 0 7 7"><path d="M1 1L6 6M6 1L1 6" stroke="#d8d8d8" stroke-width="1.9"/></svg>
<div class="a" style="left:742px;top:408px;width:266.6px;height:122.5px;background:#474543"></div>
<div class="a" style="left:742.2px;top:408.0px;width:29px;height:36.6px;background:#585858"></div>
<div class="a" style="left:755.80px;top:422.40px;width:1px;height:1px;border-radius:50%;background:#eeeeee;opacity:0.6;"></div>
<div class="t" style="left:754.30px;top:436.63px;font-size:8px;color:#ececec;transform:scaleX(0.900);">1</div>
<div class="a" style="left:772.3000000000001px;top:408.0px;width:29px;height:36.6px;background:#585858"></div>
<div class="a" style="left:785.90px;top:422.40px;width:1px;height:1px;border-radius:50%;background:#eeeeee;opacity:0.6;"></div>
<div class="t" style="left:781.40px;top:436.63px;font-size:8px;color:#ececec;transform:scaleX(0.900);">1.5</div>
<div class="a" style="left:802.4000000000001px;top:408.0px;width:29px;height:36.6px;background:#585858"></div>
<div class="a" style="left:815.75px;top:422.15px;width:1.5px;height:1.5px;border-radius:50%;background:#eeeeee;opacity:0.6;"></div>
<div class="t" style="left:814.50px;top:436.63px;font-size:8px;color:#ececec;transform:scaleX(0.900);">2</div>
<div class="a" style="left:832.5px;top:408.0px;width:29px;height:36.6px;background:#585858"></div>
<div class="a" style="left:845.60px;top:421.90px;width:2px;height:2px;border-radius:50%;background:#eeeeee;"></div>
<div class="t" style="left:844.60px;top:436.63px;font-size:8px;color:#ececec;transform:scaleX(0.900);">3</div>
<div class="a" style="left:862.6px;top:408.0px;width:29px;height:36.6px;background:#585858"></div>
<div class="a" style="left:875.20px;top:421.40px;width:3px;height:3px;border-radius:50%;background:#eeeeee;"></div>
<div class="t" style="left:874.70px;top:436.63px;font-size:8px;color:#ececec;transform:scaleX(0.900);">4</div>
<div class="a" style="left:892.7px;top:408.0px;width:29px;height:36.6px;background:#585858"></div>
<div class="a" style="left:905.05px;top:421.15px;width:3.5px;height:3.5px;border-radius:50%;background:#eeeeee;"></div>
<div class="t" style="left:904.80px;top:436.63px;font-size:8px;color:#ececec;transform:scaleX(0.900);">5</div>
<div class="a" style="left:922.8000000000001px;top:408.0px;width:29px;height:36.6px;background:#585858"></div>
<div class="a" style="left:934.40px;top:420.40px;width:5px;height:5px;border-radius:50%;background:#eeeeee;"></div>
<div class="t" style="left:934.90px;top:436.63px;font-size:8px;color:#ececec;transform:scaleX(0.900);">7</div>
<div class="a" style="left:952.9000000000001px;top:408.0px;width:29px;height:36.6px;background:#585858"></div>
<div class="a" style="left:963.25px;top:419.15px;width:7.5px;height:7.5px;border-radius:50%;background:#eeeeee;"></div>
<div class="t" style="left:963.00px;top:436.63px;font-size:8px;color:#ececec;transform:scaleX(0.900);">10</div>
<div class="a" style="left:742.2px;top:445.6px;width:29px;height:36.6px;background:#585858"></div>
<div class="a" style="left:751.55px;top:455.75px;width:9.5px;height:9.5px;border-radius:50%;background:#eeeeee;"></div>
<div class="t" style="left:752.30px;top:474.23px;font-size:8px;color:#ececec;transform:scaleX(0.900);">12</div>
<div class="a" style="left:772.3000000000001px;top:445.6px;width:29px;height:36.6px;background:#585858"></div>
<div class="a" style="left:780.90px;top:455.00px;width:11px;height:11px;border-radius:50%;background:#eeeeee;"></div>
<div class="t" style="left:782.40px;top:474.23px;font-size:8px;color:#ececec;transform:scaleX(0.900);">15</div>
<div class="a" style="left:802.4000000000001px;top:445.6px;width:29px;height:36.6px;background:#585858"></div>
<div class="a" style="left:809.00px;top:453.00px;width:15px;height:15px;border-radius:50%;background:#eeeeee;"></div>
<div class="t" style="left:812.50px;top:474.23px;font-size:8px;color:#ececec;transform:scaleX(0.900);">20</div>
<div class="a" style="left:832.5px;top:445.6px;width:29px;height:36.6px;background:#585858"></div>
<div class="a" style="left:837.60px;top:451.50px;width:18px;height:18px;border-radius:50%;background:#eeeeee;"></div>
<div class="t" style="left:842.60px;top:474.23px;font-size:8px;color:#ececec;transform:scaleX(0.900);">25</div>
<div class="a" style="left:862.6px;top:445.6px;width:29px;height:36.6px;background:#585858"></div>
<div class="a" style="left:867.45px;top:451.25px;width:18.5px;height:18.5px;border-radius:50%;background:#eeeeee;"></div>
<div class="t" style="left:872.70px;top:474.23px;font-size:8px;color:#ececec;transform:scaleX(0.900);">30</div>
<div class="a" style="left:892.7px;top:445.6px;width:29px;height:36.6px;background:#585858"></div>
<div class="a" style="left:897.55px;top:451.25px;width:18.5px;height:18.5px;border-radius:50%;background:#eeeeee;"></div>
<div class="t" style="left:902.80px;top:474.23px;font-size:8px;color:#ececec;transform:scaleX(0.900);">40</div>
<div class="a" style="left:922.8000000000001px;top:445.6px;width:29px;height:36.6px;background:#585858"></div>
<div class="a" style="left:927.65px;top:451.25px;width:18.5px;height:18.5px;border-radius:50%;background:#eeeeee;"></div>
<div class="t" style="left:932.90px;top:474.23px;font-size:8px;color:#ececec;transform:scaleX(0.900);">50</div>
<div class="a" style="left:952.9000000000001px;top:445.6px;width:29px;height:36.6px;background:#585858"></div>
<div class="a" style="left:957.75px;top:451.25px;width:18.5px;height:18.5px;border-radius:50%;background:#eeeeee;"></div>
<div class="t" style="left:963.00px;top:474.23px;font-size:8px;color:#ececec;transform:scaleX(0.900);">70</div>
<div class="a" style="left:742.2px;top:483.2px;width:29px;height:36.6px;background:#585858"></div>
<div class="a" style="left:747.05px;top:488.85px;width:18.5px;height:18.5px;border-radius:50%;background:#eeeeee;"></div>
<div class="t" style="left:750.29px;top:511.83px;font-size:8px;color:#ececec;transform:scaleX(0.900);">100</div>
<div class="a" style="left:772.3000000000001px;top:483.2px;width:29px;height:36.6px;background:#585858"></div>
<div class="a" style="left:777.15px;top:488.85px;width:18.5px;height:18.5px;border-radius:50%;background:#eeeeee;"></div>
<div class="t" style="left:780.39px;top:511.83px;font-size:8px;color:#ececec;transform:scaleX(0.900);">150</div>
<div class="a" style="left:802.4000000000001px;top:483.2px;width:29px;height:36.6px;background:#585858"></div>
<div class="a" style="left:807.25px;top:488.85px;width:18.5px;height:18.5px;border-radius:50%;background:#eeeeee;"></div>
<div class="t" style="left:810.49px;top:511.83px;font-size:8px;color:#ececec;transform:scaleX(0.900);">200</div>
<div class="a" style="left:832.5px;top:483.2px;width:29px;height:36.6px;background:#585858"></div>
<div class="a" style="left:837.35px;top:488.85px;width:18.5px;height:18.5px;border-radius:50%;background:#eeeeee;"></div>
<div class="t" style="left:840.59px;top:511.83px;font-size:8px;color:#ececec;transform:scaleX(0.900);">300</div>
<div class="a" style="left:862.6px;top:483.2px;width:29px;height:36.6px;background:#585858"></div>
<div class="a" style="left:867.45px;top:488.85px;width:18.5px;height:18.5px;border-radius:50%;background:#eeeeee;"></div>
<div class="t" style="left:870.69px;top:511.83px;font-size:8px;color:#ececec;transform:scaleX(0.900);">400</div>
<div class="a" style="left:892.7px;top:483.2px;width:29px;height:36.6px;background:#585858"></div>
<div class="a" style="left:897.55px;top:488.85px;width:18.5px;height:18.5px;border-radius:50%;background:#eeeeee;"></div>
<div class="t" style="left:900.79px;top:511.83px;font-size:8px;color:#ececec;transform:scaleX(0.900);">500</div>
<div class="a" style="left:922.8000000000001px;top:483.2px;width:29px;height:36.6px;background:#585858"></div>
<div class="a" style="left:927.65px;top:488.85px;width:18.5px;height:18.5px;border-radius:50%;background:#eeeeee;"></div>
<div class="t" style="left:930.89px;top:511.83px;font-size:8px;color:#ececec;transform:scaleX(0.900);">700</div>
<div class="a" style="left:952.9000000000001px;top:483.2px;width:29px;height:36.6px;background:#585858"></div>
<div class="a" style="left:957.75px;top:488.85px;width:18.5px;height:18.5px;border-radius:50%;background:#eeeeee;"></div>
<div class="t" style="left:958.99px;top:511.83px;font-size:8px;color:#ececec;transform:scaleX(0.900);">1000</div>
<div class="a" style="left:1008.6px;top:408px;width:15.4px;height:122.5px;background:#232323"></div>
<div class="a" style="left:1010px;top:417px;width:13px;height:104.4px;background:#6a6a6a;border-radius:4px;border:1px solid #7a7a7a"></div>
<svg style="left:1013px;top:409.5px;" width="7" height="6" viewBox="0 0 7 6"><path d="M0 5H7L3.5 0Z" fill="#b5b5b5"/></svg>
<svg style="left:1013px;top:523.5px;" width="7" height="6" viewBox="0 0 7 6"><path d="M0 0H7L3.5 5Z" fill="#b5b5b5"/></svg>
<div class="a" style="left:0px;top:531px;width:1024px;height:15px;background:#222222"></div>
<div class="t" style="left:5.00px;top:533.87px;font-size:9.6px;color:#d0d0d0;transform:scaleX(0.869);">1600 * 1200 pixel</div>
<div class="t" style="left:76.50px;top:533.87px;font-size:9.6px;color:#d0d0d0;transform:scaleX(0.898);">(11.6 * 8.7cm)</div>
<div class="t" style="left:137.00px;top:533.87px;font-size:9.6px;color:#d0d0d0;transform:scaleX(0.889);">350 dpi</div>
<div class="t" style="left:172.80px;top:533.87px;font-size:9.6px;color:#d0d0d0;transform:scaleX(0.823);">100 %</div>
<div class="t" style="left:202.00px;top:533.87px;font-size:9.6px;color:#d0d0d0;transform:scaleX(0.853);">( 556, 743 )</div>
<div class="t" style="left:251.80px;top:533.87px;font-size:9.6px;color:#d0d0d0;transform:scaleX(0.926);">Vẽ một đường thẳng bằng cách giữ phím Shift, Thay đổi cỡ cọ bằng cách giữ phím Ctrl, Alt và kéo</div>
</body></html>
